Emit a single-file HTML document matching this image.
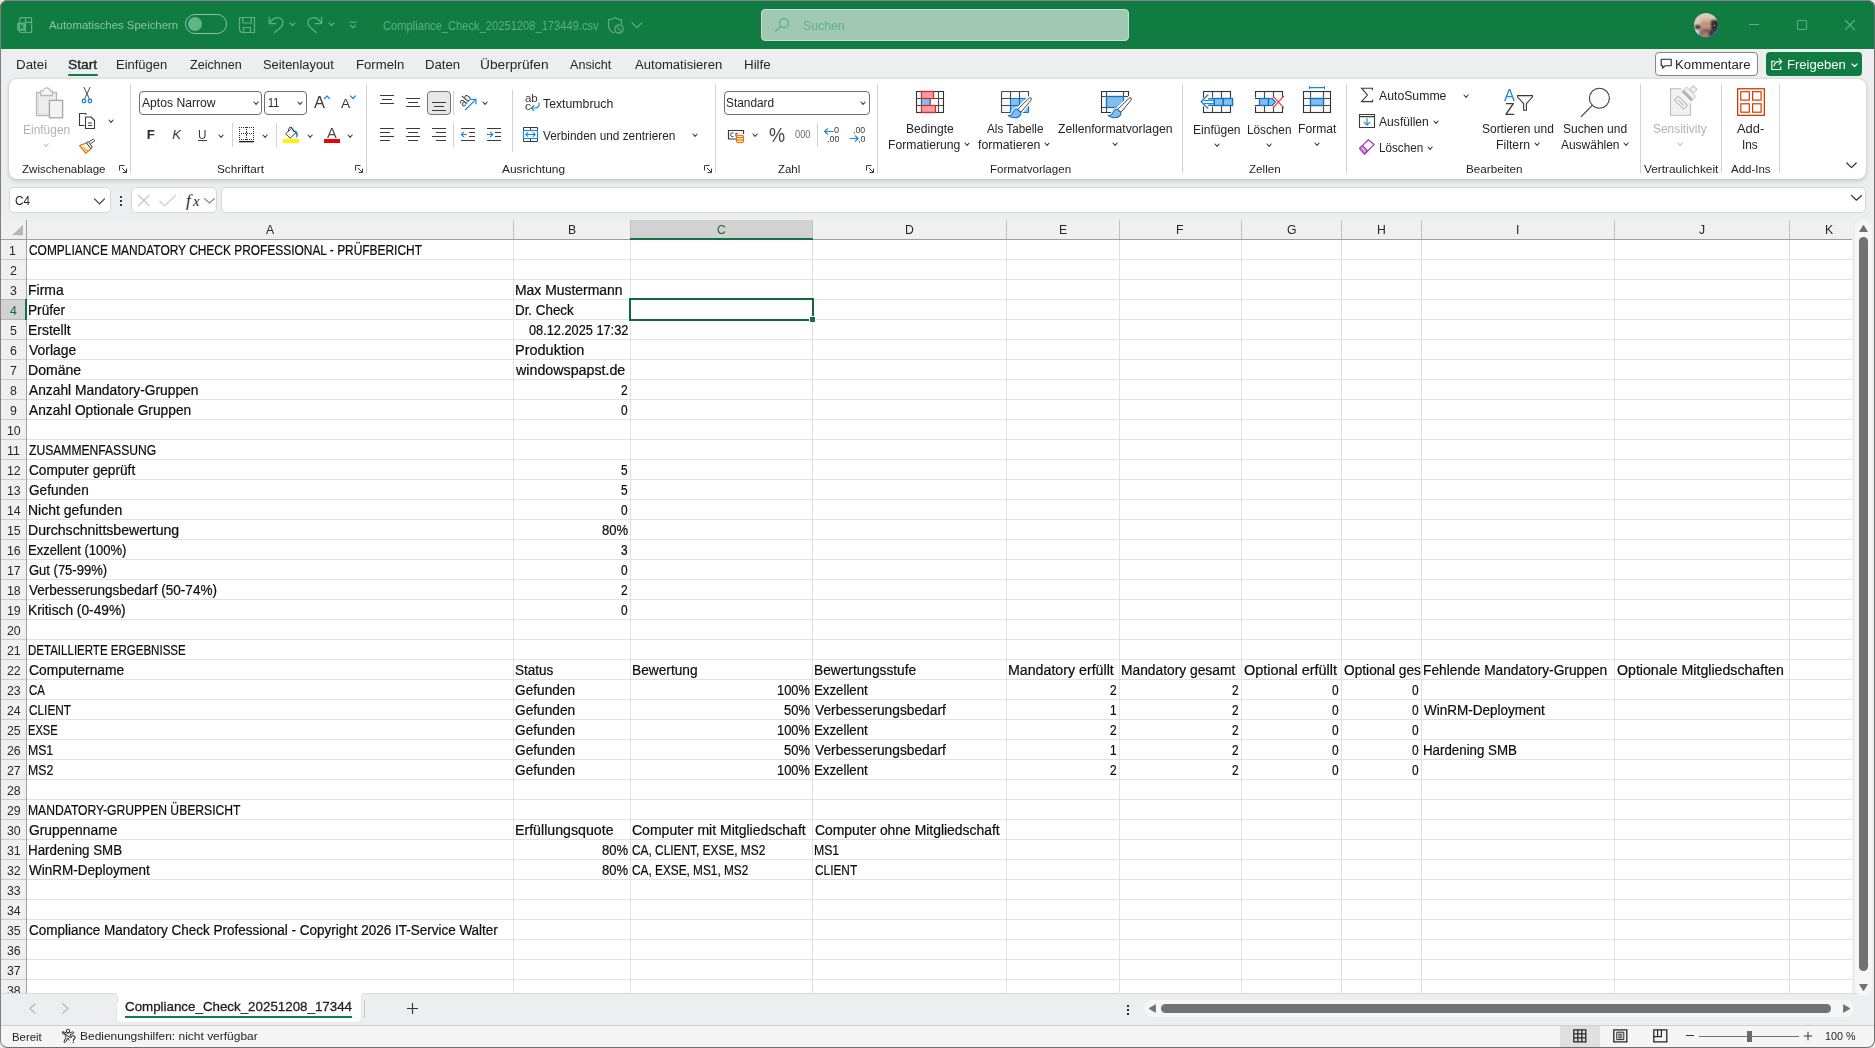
<!DOCTYPE html><html lang="de"><head><meta charset="utf-8"><title>Compliance_Check_20251208_173449.csv - Excel</title><style>

html,body{margin:0;padding:0}
body{width:1875px;height:1048px;position:relative;overflow:hidden;background:#EDEEF0;font-family:"Liberation Sans",sans-serif;}
#w div,#w svg,#w span{position:absolute;box-sizing:border-box}
#w span{white-space:pre;line-height:1;transform-origin:0 0;display:block}
#w{position:absolute;left:0;top:0;width:1875px;height:1048px;overflow:hidden}

</style></head><body><div id="w">
<div style="left:0px;top:0px;width:1875px;height:49px;background:#107C41;"></div>
<svg style="left:16px;top:16px;" width="18" height="18" viewBox="0 0 18 18" fill="none"><rect x="3.6" y="1.7" width="12" height="14.8" rx="1.6" stroke="#5FAE85" stroke-width="1.2"/><path d="M9.5 1.7 V16.5 M9.5 6.4 H15.6" stroke="#5FAE85" stroke-width="1.2"/><rect x="1.1" y="6.4" width="8.8" height="8.4" rx="1.5" fill="#5BB083"/><path d="M3.9 8.6 L7.1 12.7 M7.1 8.6 L3.9 12.7" stroke="#107C41" stroke-width="1.2"/></svg>
<div style="left:185px;top:14px;width:42px;height:20px;background:transparent;border:1px solid #8AC4A5;border-radius:10px"></div>
<div style="left:188px;top:17px;width:14px;height:14px;background:#62B389;border-radius:7px"></div>
<svg style="left:238px;top:16px;" width="18" height="18" viewBox="0 0 18 18" fill="none"><path d="M1.5 1.5 H16.5 V16.5 H3.6 L1.5 14.4 Z" stroke="#5FAE85" stroke-width="1.2" stroke-linejoin="round"/><path d="M4.8 1.5 V7 H13.2 V1.5 M5.5 16.5 V11.5 H12.5 V16.5" stroke="#5FAE85" stroke-width="1.2"/></svg>
<svg style="left:267px;top:15px;" width="18" height="20" viewBox="0 0 18 20" fill="none"><path d="M2.2 2.3 V8.7 H8.6" stroke="#5FAE85" stroke-width="1.3" stroke-linecap="round" stroke-linejoin="round"/><path d="M2.6 8.4 C4.5 4.4 8.5 1.6 12.5 3 C16.5 4.6 17 9 14 12 L7.5 17.6" stroke="#5FAE85" stroke-width="1.3" stroke-linecap="round"/></svg>
<svg style="left:287.8px;top:21.0px;" width="9" height="6.6" viewBox="0 0 9 6.6" fill="none"><path d="M2 2 L4.5 4.6 L7 2" stroke="#5FAE85" stroke-width="1.2" stroke-linecap="round" stroke-linejoin="round"/></svg>
<svg style="left:305px;top:15px;" width="18" height="20" viewBox="0 0 18 20" fill="none"><path d="M16.6 2.3 V8.7 H10.2" stroke="#5FAE85" stroke-width="1.3" stroke-linecap="round" stroke-linejoin="round"/><path d="M16.2 8.4 C14.3 4.4 10.3 1.6 6.3 3 C2.3 4.6 1.8 9 4.8 12 L11.3 17.6" stroke="#5FAE85" stroke-width="1.3" stroke-linecap="round"/></svg>
<svg style="left:326.8px;top:21.0px;" width="9" height="6.6" viewBox="0 0 9 6.6" fill="none"><path d="M2 2 L4.5 4.6 L7 2" stroke="#5FAE85" stroke-width="1.2" stroke-linecap="round" stroke-linejoin="round"/></svg>
<svg style="left:348px;top:19px;" width="10" height="10" viewBox="0 0 10 10" fill="none"><path d="M1.6 3.2 H8.6" stroke="#5FAE85" stroke-width="1.1"/><path d="M2.2 6 L5.1 8.6 L8 6" stroke="#5FAE85" stroke-width="1.2"/></svg>
<svg style="left:607px;top:16px;" width="18" height="19" viewBox="0 0 18 19" fill="none"><path d="M8 1.5 C6 3 3.5 3.8 1.5 3.8 V9 C1.5 13 4 15.8 7 17" stroke="#5FAE85" stroke-width="1.2" stroke-linecap="round"/><path d="M8 1.5 C10 3 12.5 3.8 14.5 3.8 V8" stroke="#5FAE85" stroke-width="1.2" stroke-linecap="round"/><circle cx="12" cy="13" r="4.2" stroke="#5FAE85" stroke-width="1.2"/><path d="M9.2 10.2 L14.8 15.8" stroke="#5FAE85" stroke-width="1.2"/></svg>
<svg style="left:629.7px;top:21.2px;" width="13.6" height="8.6" viewBox="0 0 13.6 8.6" fill="none"><path d="M2 2 L6.8 6.6 L11.6 2" stroke="#5FAE85" stroke-width="1.2" stroke-linecap="round" stroke-linejoin="round"/></svg>
<div style="left:761px;top:9px;width:368px;height:32px;background:#A1C8B3;border:1px solid #C6DDD1;border-radius:4px"></div>
<svg style="left:773px;top:16px;" width="18" height="18" viewBox="0 0 18 18" fill="none"><circle cx="11" cy="7" r="4.5" stroke="#5DB386" stroke-width="1.3"/><path d="M7.8 10.2 L2.5 15.5" stroke="#5DB386" stroke-width="1.3" stroke-linecap="round"/></svg>
<div style="left:1694px;top:13px;width:24px;height:24px;border-radius:12px;overflow:hidden;background:#D8CCBF"><div style="left:0;top:0;width:24px;height:24px;filter:blur(1.1px)"><div style="left:17px;top:6.5px;width:8px;height:11.5px;background:#3a2b2b"></div><div style="left:0.5px;top:11.5px;width:6px;height:4.5px;background:#33322c"></div><div style="left:0;top:17px;width:24px;height:8px;background:linear-gradient(90deg,#e9e5ea 0,#e9e5ea 14%,#5a5c86 30%,#2b2d4b 55%,#3c4170 85%,#55597f 100%)"></div><div style="left:6.2px;top:3.6px;width:11px;height:15.6px;border-radius:5.5px 5.5px 5px 5px;background:linear-gradient(180deg,#e3c3b3 0,#cfa08b 35%,#c4937e 70%,#8f6959 100%)"></div><div style="left:8px;top:18px;width:6.5px;height:7px;background:#b27a63"></div><div style="left:8px;top:9.6px;width:7.6px;height:1.8px;background:#9a7464;opacity:.8"></div><div style="left:8.6px;top:15.6px;width:6.4px;height:3.4px;border-radius:2px;background:#6d4e42;opacity:.8"></div></div><div style="left:19.6px;top:11.6px;width:1.8px;height:1.8px;background:#e4e0dc;filter:blur(.4px)"></div><div style="left:0;top:0;width:0;height:0"></div></div>
<div style="left:1749px;top:24px;width:10px;height:1px;background:#5FAE85;"></div>
<div style="left:1797px;top:20px;width:10px;height:10px;background:transparent;border:1px solid #5FAE85;border-radius:1px"></div>
<svg style="left:1844px;top:19px;" width="12" height="12" viewBox="0 0 12 12" fill="none"><path d="M1 1 L11 11 M11 1 L1 11" stroke="#5FAE85" stroke-width="1.1"/></svg>
<div style="left:68px;top:74px;width:30px;height:2.4px;background:#107C41;border-radius:1.2px"></div>
<div style="left:1655px;top:52px;width:103px;height:24px;background:#fff;border:1px solid #858585;border-radius:4px"></div>
<svg style="left:1660px;top:58px;" width="13" height="12" viewBox="0 0 13 12" fill="none"><path d="M1.2 1.2 H11.2 V7.8 H5 L2.6 10.2 V7.8 H1.2 Z" stroke="#242424" stroke-width="1.1" stroke-linejoin="round"/></svg>
<div style="left:1766px;top:52px;width:96px;height:24px;background:#107C41;border-radius:4px"></div>
<svg style="left:1770px;top:57px;" width="14" height="14" viewBox="0 0 14 14" fill="none"><path d="M5 4.2 H1.8 V12.5 H10.8 V9.5" stroke="#fff" stroke-width="1.1"/><path d="M3.8 9.5 C4.3 6.3 6.3 4.6 9 4.6 H11.5 M8.8 1.6 L11.8 4.6 L8.8 7.6" stroke="#fff" stroke-width="1.1" stroke-linejoin="round"/></svg>
<svg style="left:1850.1px;top:61.55px;" width="9" height="6.5" viewBox="0 0 9 6.5" fill="none"><path d="M2 2 L4.5 4.5 L7 2" stroke="#fff" stroke-width="1.2" stroke-linecap="round" stroke-linejoin="round"/></svg>
<div style="left:9px;top:79px;width:1857px;height:100px;background:#fff;border-radius:8px;box-shadow:0 1.5px 4px rgba(0,0,0,.17),0 0 1.5px rgba(0,0,0,.14)"></div>
<div style="left:9px;top:187px;width:102px;height:26px;background:#fff;border:1px solid #D6D6D6;border-radius:5px"></div>
<svg style="left:93px;top:197px;" width="13" height="9" viewBox="0 0 13 9" fill="none"><path d="M1.5 1.8 L6.5 6.8 L11.5 1.8" stroke="#3b3b3b" stroke-width="1.2" stroke-linecap="round" stroke-linejoin="round"/></svg>
<div style="left:120px;top:196px;width:2px;height:2px;background:#3a3a3a;"></div>
<div style="left:120px;top:200px;width:2px;height:2px;background:#3a3a3a;"></div>
<div style="left:120px;top:204px;width:2px;height:2px;background:#3a3a3a;"></div>
<div style="left:131px;top:187px;width:86px;height:26px;background:#fff;border:1px solid #D6D6D6;border-radius:5px"></div>
<svg style="left:137px;top:194px;" width="14" height="13" viewBox="0 0 14 13" fill="none"><path d="M1.2 1 L12.5 12 M12.5 1 L1.2 12" stroke="#C4C4C4" stroke-width="1.1"/></svg>
<svg style="left:158px;top:194px;" width="20" height="13" viewBox="0 0 20 13" fill="none"><path d="M1.5 7 L6.5 11.8 L18 1.2" stroke="#C4C4C4" stroke-width="1.1"/></svg>
<svg style="left:203px;top:197px;" width="13" height="8" viewBox="0 0 13 8" fill="none"><path d="M1.5 1.5 L6.5 6 L11.5 1.5" stroke="#8a8a8a" stroke-width="1.1" stroke-linecap="round" stroke-linejoin="round"/></svg>
<div style="left:221px;top:187px;width:1645px;height:26px;background:#fff;border:1px solid #D6D6D6;border-radius:5px"></div>
<svg style="left:1850px;top:194px;" width="13" height="8" viewBox="0 0 13 8" fill="none"><path d="M1.5 1.5 L6.5 6.2 L11.5 1.5" stroke="#3b3b3b" stroke-width="1.2" stroke-linecap="round" stroke-linejoin="round"/></svg>
<div style="left:110px;top:993px;width:258px;height:8px;background:#fff;"></div>
<div style="left:117px;top:993px;width:244px;height:28.5px;background:#fff;border-radius:0 0 4.5px 4.5px;box-shadow:0 0 0 0.6px #E4E4E4"></div>
<div style="left:1px;top:993px;width:116.5px;height:10px;background:#EDEEF0;border-top:1px solid #DADADA;border-right:1px solid #E2E2E2;border-top-right-radius:4.5px"></div>
<div style="left:360.5px;top:993px;width:1500px;height:10px;background:#EDEEF0;border-top:1px solid #DADADA;border-left:1px solid #E2E2E2;border-top-left-radius:4.5px"></div>
<div style="left:125px;top:1016px;width:227px;height:2px;background:#107C41;"></div>
<svg style="left:28px;top:1003px;" width="9" height="11" viewBox="0 0 9 11" fill="none"><path d="M7 1 L2 5.5 L7 10" stroke="#B4B4B4" stroke-width="1.2" stroke-linecap="round" stroke-linejoin="round"/></svg>
<svg style="left:61px;top:1003px;" width="9" height="11" viewBox="0 0 9 11" fill="none"><path d="M2 1 L7 5.5 L2 10" stroke="#B4B4B4" stroke-width="1.2" stroke-linecap="round" stroke-linejoin="round"/></svg>
<div style="left:364px;top:1000px;width:1px;height:18px;background:#C8C8C8;"></div>
<svg style="left:406px;top:1002px;" width="13" height="13" viewBox="0 0 13 13" fill="none"><path d="M6.5 1 V12 M1 6.5 H12" stroke="#333" stroke-width="1.1"/></svg>
<div style="left:1127px;top:1005px;width:2px;height:2px;background:#2b2b2b;"></div>
<div style="left:1127px;top:1009px;width:2px;height:2px;background:#2b2b2b;"></div>
<div style="left:1127px;top:1013px;width:2px;height:2px;background:#2b2b2b;"></div>
<div style="left:1144px;top:1000px;width:710px;height:17px;background:#F6F6F6;border-radius:8.5px"></div>
<svg style="left:1148px;top:1003px;" width="9" height="11" viewBox="0 0 9 11" fill="none"><path d="M7.6 1.2 Q7.9 1 7.9 1.5 V9.5 Q7.9 10 7.5 9.8 L1.2 5.9 Q0.8 5.5 1.2 5.1 Z" fill="#727272"/></svg>
<div style="left:1161px;top:1004px;width:670px;height:9.4px;background:#727272;border-radius:4.7px"></div>
<svg style="left:1842px;top:1003px;" width="9" height="11" viewBox="0 0 9 11" fill="none"><path d="M1.4 1.2 Q1.1 1 1.1 1.5 V9.5 Q1.1 10 1.5 9.8 L7.8 5.9 Q8.2 5.5 7.8 5.1 Z" fill="#727272"/></svg>
<div style="left:0px;top:1025px;width:1875px;height:1px;background:#CFCFCF;"></div>
<div style="left:0px;top:1026px;width:1875px;height:22px;background:#F5F5F5;"></div>
<svg style="left:61px;top:1028px;" width="17" height="16" viewBox="0 0 17 16" fill="none"><circle cx="7" cy="2.9" r="1.7" stroke="#2e2e2e" stroke-width="1"/><path d="M1.8 3.9 C1 4.4 1.2 5.4 2 5.6 L4.8 6.8 V9.6 L3 13.6 C2.8 14.6 4 15 4.5 14.2 L7 10 L8.2 12.2 M9.2 9.4 V6.8 L12 5.6 C12.8 5.4 13 4.4 12.2 3.9 C11.6 3.6 11 4 10.4 4.3 C8.2 5.3 5.8 5.3 3.6 4.3 C3 4 2.4 3.6 1.8 3.9 Z" stroke="#2e2e2e" stroke-width="1" stroke-linejoin="round" stroke-linecap="round"/><path d="M10.4 9.2 C10.5 7.4 14 7.2 14.1 9.2 C14.2 10.7 12.3 10.8 12.3 12.4 M12.3 14 V14.7" stroke="#2e2e2e" stroke-width="1.1" stroke-linecap="round"/></svg>
<div style="left:1560px;top:1026px;width:40px;height:22px;background:#E0E0E0;"></div>
<svg style="left:1573px;top:1029px;" width="14" height="14" viewBox="0 0 14 14" fill="none"><path d="M0.8 0.8 H12.8 V12.8 H0.8 Z M0.8 4.8 H12.8 M0.8 8.8 H12.8 M4.8 0.8 V12.8 M8.8 0.8 V12.8" stroke="#262626" stroke-width="1.3"/></svg>
<svg style="left:1613px;top:1029px;" width="15" height="14" viewBox="0 0 15 14" fill="none"><path d="M0.8 0.8 H13.8 V12.8 H0.8 Z" stroke="#262626" stroke-width="1.3"/><path d="M3.8 3.2 H10.8 V10.6 H3.8 Z M5.2 5.2 H9.4 M5.2 7 H9.4 M5.2 8.8 H9.4" stroke="#262626" stroke-width="1"/></svg>
<svg style="left:1653px;top:1029px;" width="15" height="14" viewBox="0 0 15 14" fill="none"><path d="M0.8 0.8 H13.8 V12.8 H0.8 Z" stroke="#262626" stroke-width="1.3"/><path d="M0.8 7.6 H8.4 V0.8 M4.6 0.8 V7.6" stroke="#262626" stroke-width="1.2"/></svg>
<div style="left:1686px;top:1035px;width:8px;height:1px;background:#333;"></div>
<div style="left:1699px;top:1036px;width:100px;height:1px;background:#6e6e6e;"></div>
<div style="left:1747px;top:1031px;width:5px;height:11px;background:#6a6a6a;"></div>
<svg style="left:1803px;top:1031px;" width="10" height="10" viewBox="0 0 10 10" fill="none"><path d="M5 0.8 V9.2 M0.8 5 H9.2" stroke="#333" stroke-width="1"/></svg>
<svg style="left:35px;top:86px;" width="30" height="33" viewBox="0 0 30 33" fill="none"><path d="M1.5 6.5 H6 V9.5 H17 V6.5 H21.5 V29.7 H1.5 Z" fill="#EDEDED" stroke="#B9B9B9" stroke-width="1.3"/><path d="M3.2 8 V28 H14" stroke="#DCDCDC" stroke-width="1.2"/><path d="M5.6 9.4 V4.8 H8.4 C8.4 0.9 14.8 0.9 14.8 4.8 H17.4 V9.4 Z" fill="#F6F6F6" stroke="#B9B9B9" stroke-width="1.2" stroke-linejoin="round"/><rect x="14.4" y="14.4" width="13.2" height="17.4" fill="#F3F3F3" stroke="#A6A6A6" stroke-width="1.3"/></svg>
<svg style="left:42.3px;top:142.05px;" width="8.2" height="6.3" viewBox="0 0 8.2 6.3" fill="none"><path d="M2 2 L4.1 4.3 L6.2 2" stroke="#BDBDBD" stroke-width="1.05" stroke-linecap="round" stroke-linejoin="round"/></svg>
<svg style="left:80px;top:86px;" width="14" height="19" viewBox="0 0 14 19" fill="none"><path d="M3.8 1 L9.6 13.4 M10.2 1 L4.4 13.4" stroke="#3A3A3A" stroke-width="0.9"/><circle cx="4" cy="15" r="1.75" stroke="#1E8BD8" stroke-width="1.3"/><circle cx="10" cy="15" r="1.75" stroke="#1E8BD8" stroke-width="1.3"/></svg>
<svg style="left:78px;top:112px;" width="18" height="18" viewBox="0 0 18 18" fill="none"><path d="M6.5 13.5 H1.5 V1.5 H7.5 L8.5 2.5" stroke="#3A3A3A" stroke-width="1.1" stroke-linejoin="round"/><path d="M7.5 5 H13 L16.5 8.5 V16.5 H7.5 Z" fill="#fff" stroke="#3A3A3A" stroke-width="1.1" stroke-linejoin="round"/><path d="M10 11 H14 M10 13.5 H14" stroke="#3A3A3A" stroke-width="1"/></svg>
<svg style="left:106.5px;top:118.45px;" width="8.2" height="6.3" viewBox="0 0 8.2 6.3" fill="none"><path d="M2 2 L4.1 4.3 L6.2 2" stroke="#3A3A3A" stroke-width="1.1" stroke-linecap="round" stroke-linejoin="round"/></svg>
<svg style="left:78px;top:138px;" width="18" height="18" viewBox="0 0 18 18" fill="none"><path d="M1.6 7.6 L8.6 4.8 L13.2 10.4 L7.6 15.2 Z" fill="#FFF8EE" stroke="#E07A10" stroke-width="1.3" stroke-linejoin="round"/><path d="M6.2 11.4 L10 12.2 L7.6 14.4 Z" fill="#FFD27A"/><path d="M4.4 9.2 L9.6 12.6" stroke="#E07A10" stroke-width="0.9"/><path d="M8.4 4.8 L10.2 3.5 L14.4 9.2 L12.8 10.5 Z M11.2 3.7 L14.7 1.4 Q15.7 1 16.3 1.9 Q16.7 2.8 15.9 3.5 L12.6 5.7" fill="#fff" stroke="#3A3A3A" stroke-width="1" stroke-linejoin="round"/></svg>
<svg style="left:119px;top:164.5px;" width="9" height="9" viewBox="0 0 9 9" fill="none"><path d="M0.5 5.5 V0.5 H5.5" stroke="#3b3b3b" stroke-width="1"/><path d="M2.8 2.8 L7.4 7.4 M7.5 3.6 V7.5 H3.6" stroke="#3b3b3b" stroke-width="1"/></svg>
<div style="left:130px;top:84px;width:1px;height:89px;background:#D2D2D2;"></div>
<div style="left:139px;top:91px;width:123px;height:24px;background:#fff;border:1px solid #6E6E6E;border-radius:4px"></div>
<svg style="left:251.5px;top:100.05px;" width="8.2" height="6.3" viewBox="0 0 8.2 6.3" fill="none"><path d="M2 2 L4.1 4.3 L6.2 2" stroke="#3A3A3A" stroke-width="1.1" stroke-linecap="round" stroke-linejoin="round"/></svg>
<div style="left:264px;top:91px;width:43px;height:24px;background:#fff;border:1px solid #6E6E6E;border-radius:4px"></div>
<svg style="left:296.3px;top:100.05px;" width="8.2" height="6.3" viewBox="0 0 8.2 6.3" fill="none"><path d="M2 2 L4.1 4.3 L6.2 2" stroke="#3A3A3A" stroke-width="1.1" stroke-linecap="round" stroke-linejoin="round"/></svg>
<svg style="left:323px;top:94px;" width="8" height="6" viewBox="0 0 8 6" fill="none"><path d="M1.5 4.5 L4 2 L6.5 4.5" stroke="#1E8BD8" stroke-width="1.2" stroke-linecap="round" stroke-linejoin="round"/></svg>
<svg style="left:349px;top:94px;" width="8" height="6" viewBox="0 0 8 6" fill="none"><path d="M1.5 2 L4 4.5 L6.5 2" stroke="#1E8BD8" stroke-width="1.2" stroke-linecap="round" stroke-linejoin="round"/></svg>
<div style="left:198px;top:140px;width:9px;height:1px;background:#3A3A3A;"></div>
<svg style="left:217.3px;top:132.65px;" width="8.2" height="6.3" viewBox="0 0 8.2 6.3" fill="none"><path d="M2 2 L4.1 4.3 L6.2 2" stroke="#3A3A3A" stroke-width="1.1" stroke-linecap="round" stroke-linejoin="round"/></svg>
<div style="left:232px;top:123px;width:1px;height:24px;background:#D2D2D2;"></div>
<svg style="left:239px;top:127px;" width="15" height="16" viewBox="0 0 15 16" fill="none"><g fill="#2b2b2b" shape-rendering="crispEdges"><rect x="0" y="0" width="1" height="1"/><rect x="0" y="6" width="1" height="1"/><rect x="0" y="12" width="1" height="1"/><rect x="2" y="0" width="1" height="1"/><rect x="2" y="6" width="1" height="1"/><rect x="2" y="12" width="1" height="1"/><rect x="4" y="0" width="1" height="1"/><rect x="4" y="6" width="1" height="1"/><rect x="4" y="12" width="1" height="1"/><rect x="6" y="0" width="1" height="1"/><rect x="6" y="6" width="1" height="1"/><rect x="6" y="12" width="1" height="1"/><rect x="8" y="0" width="1" height="1"/><rect x="8" y="6" width="1" height="1"/><rect x="8" y="12" width="1" height="1"/><rect x="10" y="0" width="1" height="1"/><rect x="10" y="6" width="1" height="1"/><rect x="10" y="12" width="1" height="1"/><rect x="12" y="0" width="1" height="1"/><rect x="12" y="6" width="1" height="1"/><rect x="12" y="12" width="1" height="1"/><rect x="14" y="0" width="1" height="1"/><rect x="14" y="6" width="1" height="1"/><rect x="14" y="12" width="1" height="1"/><rect x="0" y="0" width="1" height="1"/><rect x="7" y="0" width="1" height="1"/><rect x="14" y="0" width="1" height="1"/><rect x="0" y="2" width="1" height="1"/><rect x="7" y="2" width="1" height="1"/><rect x="14" y="2" width="1" height="1"/><rect x="0" y="4" width="1" height="1"/><rect x="7" y="4" width="1" height="1"/><rect x="14" y="4" width="1" height="1"/><rect x="0" y="6" width="1" height="1"/><rect x="14" y="6" width="1" height="1"/><rect x="0" y="8" width="1" height="1"/><rect x="7" y="8" width="1" height="1"/><rect x="14" y="8" width="1" height="1"/><rect x="0" y="10" width="1" height="1"/><rect x="7" y="10" width="1" height="1"/><rect x="14" y="10" width="1" height="1"/><rect x="0" y="12" width="1" height="1"/><rect x="7" y="12" width="1" height="1"/><rect x="14" y="12" width="1" height="1"/><rect x="7" y="5" width="1" height="1"/><rect x="7" y="7" width="1" height="1"/><rect x="0" y="14" width="15" height="1"/></g><rect x="0" y="14" width="15" height="1.3" fill="#1b1b1b"/></svg>
<svg style="left:261.4px;top:132.65px;" width="8.2" height="6.3" viewBox="0 0 8.2 6.3" fill="none"><path d="M2 2 L4.1 4.3 L6.2 2" stroke="#3A3A3A" stroke-width="1.1" stroke-linecap="round" stroke-linejoin="round"/></svg>
<div style="left:276px;top:123px;width:1px;height:24px;background:#D2D2D2;"></div>
<svg style="left:283px;top:125px;" width="18" height="16" viewBox="0 0 18 16" fill="none"><path d="M8.6 3.4 L12.7 7.9 L7.1 13.2 L2.6 8.7 Z" fill="#fff" stroke="#3A3A3A" stroke-width="1" stroke-linejoin="round"/><path d="M5.6 6.2 C5.2 3.6 6.4 1.8 8 2.2 C9.6 2.4 10.2 4 10.4 7" stroke="#3A3A3A" stroke-width="1"/><path d="M12 5.4 C13.8 6.2 15 8.4 14.4 10.6 C14.2 11.6 13.8 12.2 13.4 12.6 C13.6 10.6 13.4 9.4 12.6 8.2 Z" fill="#1B7FD0" stroke="#1B7FD0" stroke-width="0.6"/></svg>
<div style="left:283px;top:139px;width:16px;height:3.7px;background:#FFF100;"></div>
<svg style="left:305.5px;top:132.65px;" width="8.2" height="6.3" viewBox="0 0 8.2 6.3" fill="none"><path d="M2 2 L4.1 4.3 L6.2 2" stroke="#3A3A3A" stroke-width="1.1" stroke-linecap="round" stroke-linejoin="round"/></svg>
<div style="left:324px;top:139px;width:16px;height:3.7px;background:#F00000;"></div>
<svg style="left:346.2px;top:132.65px;" width="8.2" height="6.3" viewBox="0 0 8.2 6.3" fill="none"><path d="M2 2 L4.1 4.3 L6.2 2" stroke="#3A3A3A" stroke-width="1.1" stroke-linecap="round" stroke-linejoin="round"/></svg>
<svg style="left:355px;top:164.5px;" width="9" height="9" viewBox="0 0 9 9" fill="none"><path d="M0.5 5.5 V0.5 H5.5" stroke="#3b3b3b" stroke-width="1"/><path d="M2.8 2.8 L7.4 7.4 M7.5 3.6 V7.5 H3.6" stroke="#3b3b3b" stroke-width="1"/></svg>
<div style="left:366px;top:84px;width:1px;height:89px;background:#D2D2D2;"></div>
<div style="left:380px;top:95px;width:14px;height:1px;background:#3A3A3A;"></div>
<div style="left:382px;top:99px;width:10px;height:1px;background:#3A3A3A;"></div>
<div style="left:380px;top:103px;width:14px;height:1px;background:#3A3A3A;"></div>
<div style="left:406px;top:98px;width:14px;height:1px;background:#3A3A3A;"></div>
<div style="left:408px;top:102px;width:10px;height:1px;background:#3A3A3A;"></div>
<div style="left:406px;top:106px;width:14px;height:1px;background:#3A3A3A;"></div>
<div style="left:427px;top:91px;width:24px;height:24px;background:#E8E8E8;border:1px solid #757575;border-radius:4px"></div>
<div style="left:432px;top:102px;width:14px;height:1px;background:#3A3A3A;"></div>
<div style="left:434px;top:106px;width:10px;height:1px;background:#3A3A3A;"></div>
<div style="left:432px;top:110px;width:14px;height:1px;background:#3A3A3A;"></div>
<div style="left:453px;top:91px;width:1px;height:24px;background:#D2D2D2;"></div>
<svg style="left:459px;top:93px;" width="19" height="19" viewBox="0 0 19 19" fill="none"><path d="M6.4 16.7 L16.6 6.6 M12.4 6.3 H16.9 V10.8" stroke="#1E8BD8" stroke-width="1.2" stroke-linecap="round" stroke-linejoin="round"/></svg>
<div style="left:457.6px;top:93.7px;font-size:12.5px;line-height:1;white-space:pre;color:#444;transform:rotate(-50deg) scaleX(.9);transform-origin:50% 50%">ab</div>
<svg style="left:480.7px;top:100.05px;" width="8.2" height="6.3" viewBox="0 0 8.2 6.3" fill="none"><path d="M2 2 L4.1 4.3 L6.2 2" stroke="#3A3A3A" stroke-width="1.1" stroke-linecap="round" stroke-linejoin="round"/></svg>
<div style="left:380px;top:128px;width:14px;height:1px;background:#3A3A3A;"></div>
<div style="left:380px;top:132px;width:10px;height:1px;background:#3A3A3A;"></div>
<div style="left:380px;top:136px;width:14px;height:1px;background:#3A3A3A;"></div>
<div style="left:380px;top:140px;width:10px;height:1px;background:#3A3A3A;"></div>
<div style="left:406px;top:128px;width:14px;height:1px;background:#3A3A3A;"></div>
<div style="left:408px;top:132px;width:10px;height:1px;background:#3A3A3A;"></div>
<div style="left:406px;top:136px;width:14px;height:1px;background:#3A3A3A;"></div>
<div style="left:408px;top:140px;width:10px;height:1px;background:#3A3A3A;"></div>
<div style="left:432px;top:128px;width:14px;height:1px;background:#3A3A3A;"></div>
<div style="left:436px;top:132px;width:10px;height:1px;background:#3A3A3A;"></div>
<div style="left:432px;top:136px;width:14px;height:1px;background:#3A3A3A;"></div>
<div style="left:436px;top:140px;width:10px;height:1px;background:#3A3A3A;"></div>
<div style="left:453px;top:123px;width:1px;height:24px;background:#D2D2D2;"></div>
<div style="left:461px;top:128px;width:14px;height:1px;background:#3A3A3A;"></div>
<div style="left:469px;top:132px;width:6px;height:1px;background:#3A3A3A;"></div>
<div style="left:469px;top:136px;width:6px;height:1px;background:#3A3A3A;"></div>
<div style="left:461px;top:140px;width:14px;height:1px;background:#3A3A3A;"></div>
<svg style="left:460px;top:130px;" width="8" height="9" viewBox="0 0 8 9" fill="none"><path d="M6.6 4.5 H1.6 M3.8 2.1 L1.3 4.5 L3.8 6.9" stroke="#1E8BD8" stroke-width="1.2" stroke-linecap="round" stroke-linejoin="round"/></svg>
<div style="left:487px;top:128px;width:14px;height:1px;background:#3A3A3A;"></div>
<div style="left:495px;top:132px;width:6px;height:1px;background:#3A3A3A;"></div>
<div style="left:495px;top:136px;width:6px;height:1px;background:#3A3A3A;"></div>
<div style="left:487px;top:140px;width:14px;height:1px;background:#3A3A3A;"></div>
<svg style="left:486px;top:130px;" width="8" height="9" viewBox="0 0 8 9" fill="none"><path d="M1.2 4.5 H6.4 M4.2 2.1 L6.7 4.5 L4.2 6.9" stroke="#1E8BD8" stroke-width="1.2" stroke-linecap="round" stroke-linejoin="round"/></svg>
<div style="left:512px;top:90px;width:1px;height:62px;background:#D2D2D2;"></div>
<svg style="left:530px;top:102px;" width="10" height="10" viewBox="0 0 10 10" fill="none"><path d="M9 1 C9.6 4.2 8 6 5.5 6 H1.5 M3.8 3.6 L1.3 6 L3.8 8.4" stroke="#1E8BD8" stroke-width="1.2" stroke-linecap="round" stroke-linejoin="round"/></svg>
<svg style="left:522px;top:126px;" width="17" height="17" viewBox="0 0 17 17" fill="none"><path d="M1.5 1.5 H15.5 V15.5 H1.5 Z M8.5 1.5 V4.5 M8.5 12.5 V15.5" stroke="#3A3A3A" stroke-width="1"/><rect x="1.5" y="4.5" width="14" height="8" fill="#fff" stroke="#1E8BD8" stroke-width="1.2"/><path d="M4 8.5 H13 M5.8 6.6 L3.8 8.5 L5.8 10.4 M11.2 6.6 L13.2 8.5 L11.2 10.4" stroke="#1E8BD8" stroke-width="1.1" stroke-linecap="round" stroke-linejoin="round"/></svg>
<svg style="left:691.2px;top:132.45px;" width="8.2" height="6.3" viewBox="0 0 8.2 6.3" fill="none"><path d="M2 2 L4.1 4.3 L6.2 2" stroke="#3A3A3A" stroke-width="1.1" stroke-linecap="round" stroke-linejoin="round"/></svg>
<svg style="left:704px;top:164.5px;" width="9" height="9" viewBox="0 0 9 9" fill="none"><path d="M0.5 5.5 V0.5 H5.5" stroke="#3b3b3b" stroke-width="1"/><path d="M2.8 2.8 L7.4 7.4 M7.5 3.6 V7.5 H3.6" stroke="#3b3b3b" stroke-width="1"/></svg>
<div style="left:715px;top:84px;width:1px;height:89px;background:#D2D2D2;"></div>
<div style="left:724px;top:91px;width:146px;height:24px;background:#fff;border:1px solid #6E6E6E;border-radius:4px"></div>
<svg style="left:859.3px;top:100.05px;" width="8.2" height="6.3" viewBox="0 0 8.2 6.3" fill="none"><path d="M2 2 L4.1 4.3 L6.2 2" stroke="#3A3A3A" stroke-width="1.1" stroke-linecap="round" stroke-linejoin="round"/></svg>
<svg style="left:727px;top:129px;" width="18" height="15" viewBox="0 0 18 15" fill="none"><path d="M9 10 H1.5 V1.5 H16.5 V5" stroke="#3A3A3A" stroke-width="1.2"/><path d="M6.5 3.8 C4.2 3.2 3.6 5 3.6 5.8 C3.6 6.8 4.4 8.2 6.5 7.6 M9 4 V7.5 M9 5 C9.6 4 10.8 4 11.2 4.4" stroke="#3A3A3A" stroke-width="1"/><path d="M9.5 7.5 C9.5 5.6 16.5 5.6 16.5 7.5 V12.2 C16.5 14.2 9.5 14.2 9.5 12.2 Z" fill="#FCE8D0" stroke="#E07A10" stroke-width="1.1"/><path d="M9.5 7.5 C9.5 9.3 16.5 9.3 16.5 7.5 M9.5 9.9 C9.5 11.7 16.5 11.7 16.5 9.9" stroke="#E07A10" stroke-width="1.1"/></svg>
<svg style="left:750.5px;top:132.45px;" width="8.2" height="6.3" viewBox="0 0 8.2 6.3" fill="none"><path d="M2 2 L4.1 4.3 L6.2 2" stroke="#3A3A3A" stroke-width="1.1" stroke-linecap="round" stroke-linejoin="round"/></svg>
<div style="left:817px;top:123px;width:1px;height:24px;background:#D2D2D2;"></div>
<svg style="left:823px;top:127px;" width="17" height="17" viewBox="0 0 17 17" fill="none"><path d="M10.2 4.5 H1.8 M4.6 1.8 L1.6 4.5 L4.6 7.2" stroke="#1E8BD8" stroke-width="1.2" stroke-linecap="round" stroke-linejoin="round"/></svg>
<svg style="left:849px;top:134px;" width="12" height="9" viewBox="0 0 12 9" fill="none"><path d="M1.2 4.5 H9 M6.2 1.8 L9.2 4.5 L6.2 7.2" stroke="#1E8BD8" stroke-width="1.2" stroke-linecap="round" stroke-linejoin="round"/></svg>
<svg style="left:866px;top:164.5px;" width="9" height="9" viewBox="0 0 9 9" fill="none"><path d="M0.5 5.5 V0.5 H5.5" stroke="#3b3b3b" stroke-width="1"/><path d="M2.8 2.8 L7.4 7.4 M7.5 3.6 V7.5 H3.6" stroke="#3b3b3b" stroke-width="1"/></svg>
<div style="left:877px;top:84px;width:1px;height:89px;background:#D2D2D2;"></div>
<svg style="left:915px;top:90px;" width="30" height="24" viewBox="0 0 30 24" fill="none"><rect x="1.5" y="1.5" width="27" height="21" fill="#FAFAFA"/><path d="M1.5 8.5 H28.5 M1.5 15.5 H28.5 M6.5 1.5 V22.5 M23.5 1.5 V22.5 M18.5 1.5 V8.5 M20.5 15.5 V22.5 M15 8.5 V15.5" stroke="#4A4A4A" stroke-width="1"/><rect x="6.5" y="1.5" width="12" height="7" fill="#FF9AA2" stroke="#E0281E" stroke-width="1.1"/><rect x="6.5" y="8.5" width="8.5" height="7" fill="#83BEEC"/><path d="M6.5 8.5 V15.5 M15 8.5 V15.5" stroke="#1272C4" stroke-width="1.2"/><rect x="6.5" y="15.5" width="14" height="7" fill="#FF9AA2" stroke="#E0281E" stroke-width="1.1"/><rect x="1.5" y="1.5" width="27" height="21" stroke="#333" stroke-width="1.1"/><rect x="6.5" y="1.5" width="12" height="7" stroke="#E0281E" stroke-width="1.1"/><rect x="6.5" y="15.5" width="14" height="7" stroke="#E0281E" stroke-width="1.1"/></svg>
<svg style="left:962.7px;top:141.35px;" width="8.2" height="6.3" viewBox="0 0 8.2 6.3" fill="none"><path d="M2 2 L4.1 4.3 L6.2 2" stroke="#3A3A3A" stroke-width="1.1" stroke-linecap="round" stroke-linejoin="round"/></svg>
<svg style="left:1000px;top:90px;" width="33" height="30" viewBox="0 0 33 30" fill="none"><rect x="1.5" y="1.5" width="27" height="21" fill="#FAFAFA"/><rect x="10.5" y="8.5" width="18" height="14" fill="#83BEEC"/><path d="M10.5 8.5 H28.5 M10.5 15.5 H28.5 M10.5 8.5 V22.5 M19.5 8.5 V22.5 M28.5 8.5 V22.5 M10.5 22.5 H28.5" stroke="#1272C4" stroke-width="1.1"/><path d="M1.5 1.5 H28.5 V8.5 M1.5 1.5 V22.5 H10.5 M1.5 8.5 H10.5 M1.5 15.5 H10.5 M10.5 1.5 V8.5 M19.5 1.5 V8.5" stroke="#4A4A4A" stroke-width="1.1"/><path d="M30.9 7.8 Q31.8 8.8 30.7 10.6 L20.9 22.3 L17.5 19.5 L28.7 8.5 Q29.9 7.3 30.9 7.8 Z" fill="#fff" stroke="#fff" stroke-width="3.6" stroke-linejoin="round"/><path d="M17.3 19.3 L20.9 22.5 C21.5 25.5 18.5 27.9 14 27.7 C11.8 27.5 10 26.9 8.3 25.5 C11.8 25.6 12.6 24 13.2 22.2 C14 19.8 15.7 18.7 17.3 19.3 Z" fill="#fff" stroke="#fff" stroke-width="3.2" stroke-linejoin="round"/><path d="M30.9 7.8 Q31.8 8.8 30.7 10.6 L20.9 22.3 L17.5 19.5 L28.7 8.5 Q29.9 7.3 30.9 7.8 Z" fill="#F7F7F7" stroke="#4A4A4A" stroke-width="1" stroke-linejoin="round"/><path d="M17.3 19.3 L20.9 22.5 C21.5 25.5 18.5 27.9 14 27.7 C11.8 27.5 10 26.9 8.3 25.5 C11.8 25.6 12.6 24 13.2 22.2 C14 19.8 15.7 18.7 17.3 19.3 Z" fill="#83BEEC" stroke="#1272C4" stroke-width="1.1" stroke-linejoin="round"/></svg>
<svg style="left:1042.6px;top:141.35px;" width="8.2" height="6.3" viewBox="0 0 8.2 6.3" fill="none"><path d="M2 2 L4.1 4.3 L6.2 2" stroke="#3A3A3A" stroke-width="1.1" stroke-linecap="round" stroke-linejoin="round"/></svg>
<svg style="left:1100px;top:90px;" width="33" height="30" viewBox="0 0 33 30" fill="none"><rect x="1.5" y="1.5" width="27" height="5" fill="#FAFAFA"/><rect x="1.5" y="1.5" width="5" height="21" fill="#FAFAFA"/><rect x="1.5" y="17.5" width="12" height="5" fill="#FAFAFA"/><path d="M1.5 6.5 H28.5 M1.5 17.5 H8 M6.5 1.5 V22.5 M23.5 1.5 V6.5" stroke="#4A4A4A" stroke-width="1.1"/><path d="M28.5 6.8 V1.5 H1.5 V22.5 H12" stroke="#333" stroke-width="1.1"/><rect x="6.5" y="6.5" width="17" height="11" fill="#83BEEC" stroke="#1272C4" stroke-width="1.3"/><path d="M30.9 7.8 Q31.8 8.8 30.7 10.6 L20.9 22.3 L17.5 19.5 L28.7 8.5 Q29.9 7.3 30.9 7.8 Z" fill="#fff" stroke="#fff" stroke-width="3.6" stroke-linejoin="round"/><path d="M17.3 19.3 L20.9 22.5 C21.5 25.5 18.5 27.9 14 27.7 C11.8 27.5 10 26.9 8.3 25.5 C11.8 25.6 12.6 24 13.2 22.2 C14 19.8 15.7 18.7 17.3 19.3 Z" fill="#fff" stroke="#fff" stroke-width="3.2" stroke-linejoin="round"/><path d="M30.9 7.8 Q31.8 8.8 30.7 10.6 L20.9 22.3 L17.5 19.5 L28.7 8.5 Q29.9 7.3 30.9 7.8 Z" fill="#F7F7F7" stroke="#4A4A4A" stroke-width="1" stroke-linejoin="round"/><path d="M17.3 19.3 L20.9 22.5 C21.5 25.5 18.5 27.9 14 27.7 C11.8 27.5 10 26.9 8.3 25.5 C11.8 25.6 12.6 24 13.2 22.2 C14 19.8 15.7 18.7 17.3 19.3 Z" fill="#83BEEC" stroke="#1272C4" stroke-width="1.1" stroke-linejoin="round"/></svg>
<svg style="left:1110.5px;top:141.35px;" width="8.2" height="6.3" viewBox="0 0 8.2 6.3" fill="none"><path d="M2 2 L4.1 4.3 L6.2 2" stroke="#3A3A3A" stroke-width="1.1" stroke-linecap="round" stroke-linejoin="round"/></svg>
<div style="left:1182px;top:84px;width:1px;height:89px;background:#D2D2D2;"></div>
<svg style="left:1199px;top:88px;" width="36" height="28" viewBox="0 0 36 28" fill="none"><rect x="4.5" y="3.5" width="27" height="21" fill="#FAFAFA"/><path d="M4.5 10.5 H31.5 M4.5 17.5 H31.5 M13.5 3.5 V24.5 M22.5 3.5 V24.5" stroke="#4A4A4A" stroke-width="1.1"/><rect x="4.5" y="3.5" width="27" height="21" stroke="#333" stroke-width="1.1"/><rect x="3" y="9.6" width="12" height="8.8" fill="#fff"/><rect x="9" y="10.5" width="6.4" height="7" fill="#83BEEC"/><rect x="15.3" y="10.5" width="9" height="7" fill="#83BEEC" stroke="#1272C4" stroke-width="1.3"/><rect x="24.3" y="10.5" width="9.3" height="7" fill="#83BEEC" stroke="#1272C4" stroke-width="1.3"/><path d="M15.3 10.5 H9.4 M15.3 17.5 H9.4" stroke="#1272C4" stroke-width="1.2"/><rect x="4.5" y="12.6" width="10.2" height="2.8" fill="#fff"/><path d="M14.8 12.5 H4.6 M14.8 15.5 H4.6 M14.8 12.5 V15.5" stroke="#1E8BD8" stroke-width="1.1"/><path d="M8.8 7.1 L2.2 13.7 L8.8 20.3" stroke="#1E8BD8" stroke-width="1.4" stroke-linecap="round" stroke-linejoin="round"/></svg>
<svg style="left:1212.5px;top:142.15px;" width="8.2" height="6.3" viewBox="0 0 8.2 6.3" fill="none"><path d="M2 2 L4.1 4.3 L6.2 2" stroke="#3A3A3A" stroke-width="1.1" stroke-linecap="round" stroke-linejoin="round"/></svg>
<svg style="left:1254px;top:90px;" width="34" height="24" viewBox="0 0 34 24" fill="none"><rect x="1.5" y="1.5" width="27" height="21" fill="#FAFAFA"/><path d="M1.5 8.5 H28.5 M1.5 15.5 H28.5 M10.5 1.5 V22.5 M19.5 1.5 V22.5" stroke="#4A4A4A" stroke-width="1.1"/><rect x="1.5" y="1.5" width="27" height="21" stroke="#333" stroke-width="1.1"/><rect x="-1" y="7.5" width="6" height="9" fill="#fff"/><rect x="18" y="7.5" width="12" height="9" fill="#fff"/><path d="M1 8.5 H5.5 M1 15.5 H5.5" stroke="#333" stroke-width="1.1"/><rect x="5.5" y="8.5" width="9" height="7" fill="#83BEEC" stroke="#1272C4" stroke-width="1.3"/><path d="M14.5 8.5 H18.4 L21.4 12 L18.4 15.5 H14.5 Z" fill="#83BEEC" stroke="#1272C4" stroke-width="1.2"/><path d="M19.2 6.4 L29.6 17.6 M29.6 6.4 L19.2 17.6" stroke="#EE3A3A" stroke-width="1.2" stroke-linecap="round"/></svg>
<svg style="left:1264.6px;top:142.15px;" width="8.2" height="6.3" viewBox="0 0 8.2 6.3" fill="none"><path d="M2 2 L4.1 4.3 L6.2 2" stroke="#3A3A3A" stroke-width="1.1" stroke-linecap="round" stroke-linejoin="round"/></svg>
<svg style="left:1302px;top:84px;" width="31" height="30" viewBox="0 0 31 30" fill="none"><rect transform="translate(0,6)" x="1.5" y="1.5" width="27" height="21" fill="#FAFAFA"/><path transform="translate(0,6)" d="M1.5 8.5 H28.5 M1.5 15.5 H28.5 M8.5 1.5 V22.5 M21.5 1.5 V22.5" stroke="#4A4A4A" stroke-width="1.1"/><rect transform="translate(0,6)" x="1.5" y="1.5" width="27" height="21" stroke="#333" stroke-width="1.1"/><rect transform="translate(0,6)" x="8.5" y="8.5" width="13" height="7" fill="#83BEEC" stroke="#1272C4" stroke-width="1.4"/><path d="M7.5 3.6 H22.5 M7.5 2 V5.2 M22.5 2 V5.2" stroke="#1E8BD8" stroke-width="1.1"/></svg>
<svg style="left:1312.5px;top:141.35px;" width="8.2" height="6.3" viewBox="0 0 8.2 6.3" fill="none"><path d="M2 2 L4.1 4.3 L6.2 2" stroke="#3A3A3A" stroke-width="1.1" stroke-linecap="round" stroke-linejoin="round"/></svg>
<div style="left:1346px;top:84px;width:1px;height:89px;background:#D2D2D2;"></div>
<svg style="left:1360px;top:87px;" width="14" height="16" viewBox="0 0 14 16" fill="none"><path d="M12.4 3.2 V1.2 H1.6 L7.4 8 L1.6 14.6 H12.6 V12.6" stroke="#3A3A3A" stroke-width="1.1" stroke-linejoin="miter"/></svg>
<svg style="left:1462.4px;top:92.85px;" width="8.2" height="6.3" viewBox="0 0 8.2 6.3" fill="none"><path d="M2 2 L4.1 4.3 L6.2 2" stroke="#3A3A3A" stroke-width="1.1" stroke-linecap="round" stroke-linejoin="round"/></svg>
<svg style="left:1358px;top:113px;" width="18" height="16" viewBox="0 0 18 16" fill="none"><path d="M1.5 1.5 H16.5 V14.5 H1.5 Z M1.5 3.6 H16.5" stroke="#3A3A3A" stroke-width="1.1"/><path d="M9 5.6 V12 M6.2 9.4 L9 12.2 L11.8 9.4" stroke="#1E8BD8" stroke-width="1.2" stroke-linecap="round" stroke-linejoin="round"/></svg>
<svg style="left:1431.6px;top:118.65px;" width="8.2" height="6.3" viewBox="0 0 8.2 6.3" fill="none"><path d="M2 2 L4.1 4.3 L6.2 2" stroke="#3A3A3A" stroke-width="1.1" stroke-linecap="round" stroke-linejoin="round"/></svg>
<svg style="left:1358px;top:138px;" width="18" height="18" viewBox="0 0 18 18" fill="none"><path d="M1.6 10.4 L10.4 1.8 L16 6.6 L6.6 16 Z" fill="#fff" stroke="#A541B5" stroke-width="1.3" stroke-linejoin="round"/><path d="M1.6 10.4 L4.6 7.6 L9.6 12.8 L6.6 16 Z" fill="#DE9BE6" stroke="#A541B5" stroke-width="1.3" stroke-linejoin="round"/></svg>
<svg style="left:1425.8px;top:144.75px;" width="8.2" height="6.3" viewBox="0 0 8.2 6.3" fill="none"><path d="M2 2 L4.1 4.3 L6.2 2" stroke="#3A3A3A" stroke-width="1.1" stroke-linecap="round" stroke-linejoin="round"/></svg>
<svg style="left:1516px;top:94px;" width="18" height="18" viewBox="0 0 18 18" fill="none"><path d="M1.5 1.6 H16.5 V3 L10.4 9.6 V16.2 H7.6 V9.6 L1.5 3 Z" fill="#FAFAFA" stroke="#3A3A3A" stroke-width="1.1" stroke-linejoin="round"/></svg>
<svg style="left:1532.7px;top:141.35px;" width="8.2" height="6.3" viewBox="0 0 8.2 6.3" fill="none"><path d="M2 2 L4.1 4.3 L6.2 2" stroke="#3A3A3A" stroke-width="1.1" stroke-linecap="round" stroke-linejoin="round"/></svg>
<svg style="left:1579px;top:86px;" width="33" height="33" viewBox="0 0 33 33" fill="none"><circle cx="20.4" cy="12.2" r="10" fill="#FAFAFA" stroke="#3A3A3A" stroke-width="1.1"/><path d="M13.2 19.4 L2.2 30.6" stroke="#3A3A3A" stroke-width="1.1" stroke-linecap="round"/></svg>
<svg style="left:1621.7px;top:141.35px;" width="8.2" height="6.3" viewBox="0 0 8.2 6.3" fill="none"><path d="M2 2 L4.1 4.3 L6.2 2" stroke="#3A3A3A" stroke-width="1.1" stroke-linecap="round" stroke-linejoin="round"/></svg>
<div style="left:1640px;top:84px;width:1px;height:89px;background:#D2D2D2;"></div>
<svg style="left:1668px;top:84px;" width="32" height="34" viewBox="0 0 32 34" fill="none"><path d="M13.4 4.9 H2.7 V31.2 H22.3 V19.4" fill="none" stroke="#B9B9B9" stroke-width="1.3"/><path d="M3.3 5.5 H13.6 L21.7 19.4 V30.6 H3.3 Z" fill="#F1F1F1"/><g transform="translate(12.9,18.6) rotate(45)"><rect x="-6.4" y="-2.7" width="12.8" height="5.4" fill="#F7F7F7" stroke="#B9B9B9" stroke-width="1.1"/><path d="M-4.2 0 H4.2" stroke="#B9B9B9" stroke-width="1.2"/></g><g transform="translate(20.9,10.1) rotate(45)"><rect x="-7.6" y="-4.6" width="15.2" height="9.2" fill="#fff"/><rect x="-6.6" y="-3.4" width="13.2" height="6.8" fill="#EFEFEF" stroke="#C4C4C4" stroke-width="0.9"/><rect x="-6.6" y="0.6" width="13.2" height="2.8" fill="#B4B4B4"/></g><g transform="translate(25.4,5.3) rotate(45)"><rect x="-2.6" y="-2.4" width="5.2" height="4.8" fill="#F3F3F3" stroke="#C0C0C0" stroke-width="1"/></g></svg>
<svg style="left:1676.3px;top:141.35px;" width="8.2" height="6.3" viewBox="0 0 8.2 6.3" fill="none"><path d="M2 2 L4.1 4.3 L6.2 2" stroke="#BDBDBD" stroke-width="1.05" stroke-linecap="round" stroke-linejoin="round"/></svg>
<div style="left:1721px;top:84px;width:1px;height:89px;background:#D2D2D2;"></div>
<svg style="left:1736px;top:87px;" width="30" height="30" viewBox="0 0 30 30" fill="none"><rect x="1.65" y="1.75" width="26.7" height="26.6" stroke="#D83B01" stroke-width="1.3"/><rect x="4.8" y="4.7" width="8.5" height="8.4" stroke="#D83B01" stroke-width="1.2"/><rect x="16.6" y="4.7" width="8.5" height="8.4" stroke="#D83B01" stroke-width="1.2"/><rect x="4.8" y="16.8" width="8.5" height="8.4" stroke="#D83B01" stroke-width="1.2"/><rect x="16.6" y="16.8" width="8.5" height="8.4" stroke="#D83B01" stroke-width="1.2"/></svg>
<div style="left:1779px;top:84px;width:1px;height:89px;background:#D2D2D2;"></div>
<svg style="left:1845px;top:161px;" width="13" height="9" viewBox="0 0 13 9" fill="none"><path d="M1.8 2 L6.5 6.6 L11.2 2" stroke="#333" stroke-width="1.2" stroke-linecap="round" stroke-linejoin="round"/></svg>
<div style="left:27px;top:240px;width:1825px;height:753px;background:#fff;"></div>
<div style="left:1px;top:220px;width:1851px;height:20px;background:#F0F0F0;"></div>
<div style="left:1px;top:240px;width:26px;height:753px;background:#F0F0F0;"></div>
<div style="left:27px;top:259px;width:1825px;height:1px;background:#E1E1E1;"></div>
<div style="left:1px;top:259px;width:25px;height:1px;background:#CDCDCD;"></div>
<div style="left:27px;top:279px;width:1825px;height:1px;background:#E1E1E1;"></div>
<div style="left:1px;top:279px;width:25px;height:1px;background:#CDCDCD;"></div>
<div style="left:27px;top:299px;width:1825px;height:1px;background:#E1E1E1;"></div>
<div style="left:1px;top:299px;width:25px;height:1px;background:#B4B4B4;"></div>
<div style="left:27px;top:319px;width:1825px;height:1px;background:#E1E1E1;"></div>
<div style="left:1px;top:319px;width:25px;height:1px;background:#B4B4B4;"></div>
<div style="left:27px;top:339px;width:1825px;height:1px;background:#E1E1E1;"></div>
<div style="left:1px;top:339px;width:25px;height:1px;background:#CDCDCD;"></div>
<div style="left:27px;top:359px;width:1825px;height:1px;background:#E1E1E1;"></div>
<div style="left:1px;top:359px;width:25px;height:1px;background:#CDCDCD;"></div>
<div style="left:27px;top:379px;width:1825px;height:1px;background:#E1E1E1;"></div>
<div style="left:1px;top:379px;width:25px;height:1px;background:#CDCDCD;"></div>
<div style="left:27px;top:399px;width:1825px;height:1px;background:#E1E1E1;"></div>
<div style="left:1px;top:399px;width:25px;height:1px;background:#CDCDCD;"></div>
<div style="left:27px;top:419px;width:1825px;height:1px;background:#E1E1E1;"></div>
<div style="left:1px;top:419px;width:25px;height:1px;background:#CDCDCD;"></div>
<div style="left:27px;top:439px;width:1825px;height:1px;background:#E1E1E1;"></div>
<div style="left:1px;top:439px;width:25px;height:1px;background:#CDCDCD;"></div>
<div style="left:27px;top:459px;width:1825px;height:1px;background:#E1E1E1;"></div>
<div style="left:1px;top:459px;width:25px;height:1px;background:#CDCDCD;"></div>
<div style="left:27px;top:479px;width:1825px;height:1px;background:#E1E1E1;"></div>
<div style="left:1px;top:479px;width:25px;height:1px;background:#CDCDCD;"></div>
<div style="left:27px;top:499px;width:1825px;height:1px;background:#E1E1E1;"></div>
<div style="left:1px;top:499px;width:25px;height:1px;background:#CDCDCD;"></div>
<div style="left:27px;top:519px;width:1825px;height:1px;background:#E1E1E1;"></div>
<div style="left:1px;top:519px;width:25px;height:1px;background:#CDCDCD;"></div>
<div style="left:27px;top:539px;width:1825px;height:1px;background:#E1E1E1;"></div>
<div style="left:1px;top:539px;width:25px;height:1px;background:#CDCDCD;"></div>
<div style="left:27px;top:559px;width:1825px;height:1px;background:#E1E1E1;"></div>
<div style="left:1px;top:559px;width:25px;height:1px;background:#CDCDCD;"></div>
<div style="left:27px;top:579px;width:1825px;height:1px;background:#E1E1E1;"></div>
<div style="left:1px;top:579px;width:25px;height:1px;background:#CDCDCD;"></div>
<div style="left:27px;top:599px;width:1825px;height:1px;background:#E1E1E1;"></div>
<div style="left:1px;top:599px;width:25px;height:1px;background:#CDCDCD;"></div>
<div style="left:27px;top:619px;width:1825px;height:1px;background:#E1E1E1;"></div>
<div style="left:1px;top:619px;width:25px;height:1px;background:#CDCDCD;"></div>
<div style="left:27px;top:639px;width:1825px;height:1px;background:#E1E1E1;"></div>
<div style="left:1px;top:639px;width:25px;height:1px;background:#CDCDCD;"></div>
<div style="left:27px;top:659px;width:1825px;height:1px;background:#E1E1E1;"></div>
<div style="left:1px;top:659px;width:25px;height:1px;background:#CDCDCD;"></div>
<div style="left:27px;top:679px;width:1825px;height:1px;background:#E1E1E1;"></div>
<div style="left:1px;top:679px;width:25px;height:1px;background:#CDCDCD;"></div>
<div style="left:27px;top:699px;width:1825px;height:1px;background:#E1E1E1;"></div>
<div style="left:1px;top:699px;width:25px;height:1px;background:#CDCDCD;"></div>
<div style="left:27px;top:719px;width:1825px;height:1px;background:#E1E1E1;"></div>
<div style="left:1px;top:719px;width:25px;height:1px;background:#CDCDCD;"></div>
<div style="left:27px;top:739px;width:1825px;height:1px;background:#E1E1E1;"></div>
<div style="left:1px;top:739px;width:25px;height:1px;background:#CDCDCD;"></div>
<div style="left:27px;top:759px;width:1825px;height:1px;background:#E1E1E1;"></div>
<div style="left:1px;top:759px;width:25px;height:1px;background:#CDCDCD;"></div>
<div style="left:27px;top:779px;width:1825px;height:1px;background:#E1E1E1;"></div>
<div style="left:1px;top:779px;width:25px;height:1px;background:#CDCDCD;"></div>
<div style="left:27px;top:799px;width:1825px;height:1px;background:#E1E1E1;"></div>
<div style="left:1px;top:799px;width:25px;height:1px;background:#CDCDCD;"></div>
<div style="left:27px;top:819px;width:1825px;height:1px;background:#E1E1E1;"></div>
<div style="left:1px;top:819px;width:25px;height:1px;background:#CDCDCD;"></div>
<div style="left:27px;top:839px;width:1825px;height:1px;background:#E1E1E1;"></div>
<div style="left:1px;top:839px;width:25px;height:1px;background:#CDCDCD;"></div>
<div style="left:27px;top:859px;width:1825px;height:1px;background:#E1E1E1;"></div>
<div style="left:1px;top:859px;width:25px;height:1px;background:#CDCDCD;"></div>
<div style="left:27px;top:879px;width:1825px;height:1px;background:#E1E1E1;"></div>
<div style="left:1px;top:879px;width:25px;height:1px;background:#CDCDCD;"></div>
<div style="left:27px;top:899px;width:1825px;height:1px;background:#E1E1E1;"></div>
<div style="left:1px;top:899px;width:25px;height:1px;background:#CDCDCD;"></div>
<div style="left:27px;top:919px;width:1825px;height:1px;background:#E1E1E1;"></div>
<div style="left:1px;top:919px;width:25px;height:1px;background:#CDCDCD;"></div>
<div style="left:27px;top:939px;width:1825px;height:1px;background:#E1E1E1;"></div>
<div style="left:1px;top:939px;width:25px;height:1px;background:#CDCDCD;"></div>
<div style="left:27px;top:959px;width:1825px;height:1px;background:#E1E1E1;"></div>
<div style="left:1px;top:959px;width:25px;height:1px;background:#CDCDCD;"></div>
<div style="left:27px;top:979px;width:1825px;height:1px;background:#E1E1E1;"></div>
<div style="left:1px;top:979px;width:25px;height:1px;background:#CDCDCD;"></div>
<div style="left:513px;top:240px;width:1px;height:753px;background:#E1E1E1;"></div>
<div style="left:630px;top:240px;width:1px;height:753px;background:#E1E1E1;"></div>
<div style="left:812px;top:240px;width:1px;height:753px;background:#E1E1E1;"></div>
<div style="left:1006px;top:240px;width:1px;height:753px;background:#E1E1E1;"></div>
<div style="left:1119px;top:240px;width:1px;height:753px;background:#E1E1E1;"></div>
<div style="left:1241px;top:240px;width:1px;height:753px;background:#E1E1E1;"></div>
<div style="left:1341px;top:240px;width:1px;height:753px;background:#E1E1E1;"></div>
<div style="left:1421px;top:240px;width:1px;height:753px;background:#E1E1E1;"></div>
<div style="left:1614px;top:240px;width:1px;height:753px;background:#E1E1E1;"></div>
<div style="left:1789px;top:240px;width:1px;height:753px;background:#E1E1E1;"></div>
<div style="left:513px;top:220px;width:1px;height:19px;background:#C2C2C2;"></div>
<div style="left:630px;top:220px;width:1px;height:19px;background:#C2C2C2;"></div>
<div style="left:812px;top:220px;width:1px;height:19px;background:#C2C2C2;"></div>
<div style="left:1006px;top:220px;width:1px;height:19px;background:#C2C2C2;"></div>
<div style="left:1119px;top:220px;width:1px;height:19px;background:#C2C2C2;"></div>
<div style="left:1241px;top:220px;width:1px;height:19px;background:#C2C2C2;"></div>
<div style="left:1341px;top:220px;width:1px;height:19px;background:#C2C2C2;"></div>
<div style="left:1421px;top:220px;width:1px;height:19px;background:#C2C2C2;"></div>
<div style="left:1614px;top:220px;width:1px;height:19px;background:#C2C2C2;"></div>
<div style="left:1789px;top:220px;width:1px;height:19px;background:#C2C2C2;"></div>
<div style="left:631px;top:220px;width:181px;height:18px;background:#D2D2D2;"></div>
<div style="left:1px;top:239px;width:1851px;height:1px;background:#9F9F9F;"></div>
<div style="left:630px;top:238px;width:183px;height:2px;background:#137041;"></div>
<div style="left:26px;top:220px;width:1px;height:773px;background:#9F9F9F;"></div>
<svg style="left:11px;top:224px;" width="13" height="12" viewBox="0 0 13 12" fill="none"><path d="M12 0.8 V11.2 H1 Z" fill="#B7B7B7"/></svg>
<div style="left:1px;top:300px;width:25px;height:19px;background:#D2D2D2;"></div>
<div style="left:25px;top:299px;width:2px;height:21px;background:#137041;"></div>
<div style="left:629px;top:298px;width:185px;height:23px;border:2px solid #0F6A38"></div>
<div style="left:809px;top:316px;width:7px;height:7px;background:#fff;"></div>
<div style="left:810px;top:317px;width:5px;height:5px;background:#17703F;"></div>
<div style="left:1855px;top:220px;width:17px;height:776px;background:#F6F6F6;border-radius:8.5px"></div>
<svg style="left:1858px;top:224px;" width="11" height="9" viewBox="0 0 11 9" fill="none"><path d="M1.2 7.6 Q1 7.9 1.5 7.9 H9.5 Q10 7.9 9.8 7.5 L5.9 1.2 Q5.5 0.8 5.1 1.2 Z" fill="#727272"/></svg>
<div style="left:1859px;top:237px;width:9px;height:734px;background:#727272;border-radius:4.5px"></div>
<svg style="left:1858px;top:983px;" width="11" height="9" viewBox="0 0 11 9" fill="none"><path d="M1.2 1.4 Q1 1.1 1.5 1.1 H9.5 Q10 1.1 9.8 1.5 L5.9 7.8 Q5.5 8.2 5.1 7.8 Z" fill="#727272"/></svg>
<span style="left:48.97px;top:20.00px;font-size:11px;color:#8AC4A5;transform:scaleX(1.0354);">Automatisches Speichern</span>
<span style="left:382.83px;top:20.00px;font-size:12.5px;color:#5FAE85;transform:scaleX(0.8919);">Compliance_Check_20251208_173449.csv</span>
<span style="left:802.61px;top:20.00px;font-size:12.5px;color:#5DB386;transform:scaleX(0.9811);">Suchen</span>
<span style="left:16.40px;top:59.00px;font-size:12.5px;color:#242424;transform:scaleX(1.0671);">Datei</span>
<span style="left:67.55px;top:59.00px;font-size:12.5px;color:#1b1b1b;-webkit-text-stroke:0.3px currentColor;transform:scaleX(1.1063);">Start</span>
<span style="left:116.23px;top:59.00px;font-size:12.5px;color:#242424;transform:scaleX(1.0367);">Einfügen</span>
<span style="left:189.54px;top:59.00px;font-size:12.5px;color:#242424;transform:scaleX(1.0055);">Zeichnen</span>
<span style="left:263.27px;top:59.00px;font-size:12.5px;color:#242424;transform:scaleX(1.0283);">Seitenlayout</span>
<span style="left:356.22px;top:59.00px;font-size:12.5px;color:#242424;transform:scaleX(1.0523);">Formeln</span>
<span style="left:425.21px;top:59.00px;font-size:12.5px;color:#242424;transform:scaleX(1.0551);">Daten</span>
<span style="left:480.13px;top:59.00px;font-size:12.5px;color:#242424;transform:scaleX(1.0970);">Überprüfen</span>
<span style="left:570.07px;top:59.00px;font-size:12.5px;color:#242424;transform:scaleX(1.0059);">Ansicht</span>
<span style="left:635.07px;top:59.00px;font-size:12.5px;color:#242424;transform:scaleX(1.0466);">Automatisieren</span>
<span style="left:743.50px;top:59.00px;font-size:12.5px;color:#242424;transform:scaleX(1.0690);">Hilfe</span>
<span style="left:1675.49px;top:59.00px;font-size:12.5px;color:#242424;transform:scaleX(1.0567);">Kommentare</span>
<span style="left:1786.52px;top:59.00px;font-size:12.5px;color:#fff;transform:scaleX(1.0437);">Freigeben</span>
<span style="left:15.40px;top:195.00px;font-size:12.5px;color:#242424;transform:scaleX(0.9401);">C4</span>
<span style="left:185.90px;top:192.00px;font-size:17px;color:#2b2b2b;font-style:italic;font-family:'Liberation Serif',serif;transform:scaleX(1.0000);">f</span>
<span style="left:192.91px;top:194.00px;font-size:14.5px;color:#2b2b2b;font-style:italic;font-family:'Liberation Serif',serif;transform:scaleX(1.0000);">x</span>
<span style="left:124.91px;top:1000.00px;font-size:13px;color:#1f1f1f;-webkit-text-stroke:0.3px currentColor;transform:scaleX(1.0264);">Compliance_Check_20251208_17344</span>
<span style="left:11.87px;top:1032.00px;font-size:11px;color:#242424;transform:scaleX(1.0332);">Bereit</span>
<span style="left:79.72px;top:1031.00px;font-size:11px;color:#242424;transform:scaleX(1.0884);">Bedienungshilfen: nicht verfügbar</span>
<span style="left:1824.88px;top:1031.00px;font-size:11px;color:#242424;transform:scaleX(0.9802);">100 %</span>
<span style="left:22.71px;top:124.00px;font-size:12.5px;color:#B3B3B3;transform:scaleX(0.9571);">Einfügen</span>
<span style="left:21.65px;top:164.00px;font-size:11px;color:#242424;transform:scaleX(1.0508);">Zwischenablage</span>
<span style="left:141.88px;top:97.00px;font-size:12.5px;color:#242424;transform:scaleX(0.9726);">Aptos Narrow</span>
<span style="left:267.55px;top:97.00px;font-size:12.5px;color:#242424;transform:scaleX(0.8600);">11</span>
<span style="left:313.99px;top:94.00px;font-size:17px;color:#3A3A3A;transform:scaleX(0.9659);">A</span>
<span style="left:341.37px;top:97.00px;font-size:13.5px;color:#3A3A3A;transform:scaleX(1.0278);">A</span>
<span style="left:146.79px;top:128.00px;font-size:13px;color:#2b2b2b;font-weight:700;transform:scaleX(1.0000);">F</span>
<span style="left:172.22px;top:128.00px;font-size:13px;color:#3A3A3A;font-style:italic;transform:scaleX(1.0000);">K</span>
<span style="left:198.28px;top:128.00px;font-size:13px;color:#3A3A3A;transform:scaleX(0.9000);">U</span>
<span style="left:327.38px;top:126.00px;font-size:14.5px;color:#4a4a4a;transform:scaleX(1.0036);">A</span>
<span style="left:216.75px;top:164.00px;font-size:11px;color:#242424;transform:scaleX(1.0686);">Schriftart</span>
<span style="left:524.89px;top:93.00px;font-size:10.5px;color:#3A3A3A;transform:scaleX(1.0909);">ab</span>
<span style="left:524.81px;top:101.00px;font-size:10.5px;color:#3A3A3A;transform:scaleX(1.1668);">c</span>
<span style="left:542.86px;top:98.00px;font-size:12.5px;color:#242424;transform:scaleX(0.9825);">Textumbruch</span>
<span style="left:542.87px;top:130.00px;font-size:12.5px;color:#242424;transform:scaleX(0.9476);">Verbinden und zentrieren</span>
<span style="left:501.96px;top:164.00px;font-size:11px;color:#242424;transform:scaleX(1.0854);">Ausrichtung</span>
<span style="left:726.34px;top:97.00px;font-size:12.5px;color:#242424;transform:scaleX(0.9480);">Standard</span>
<span style="left:769.08px;top:126.00px;font-size:19.5px;color:#444;transform:scaleX(0.9300);">%</span>
<span style="left:794.72px;top:129.00px;font-size:10.5px;color:#6e6e6e;transform:scaleX(0.8837);">000</span>
<span style="left:834.16px;top:126.00px;font-size:9px;color:#3A3A3A;transform:scaleX(1.0184);">0</span>
<span style="left:826.84px;top:135.00px;font-size:9px;color:#3A3A3A;transform:scaleX(0.9826);">,00</span>
<span style="left:853.05px;top:126.00px;font-size:9px;color:#3A3A3A;transform:scaleX(0.9739);">,00</span>
<span style="left:857.84px;top:135.00px;font-size:9px;color:#3A3A3A;transform:scaleX(0.9845);">,0</span>
<span style="left:777.86px;top:164.00px;font-size:11px;color:#242424;transform:scaleX(1.0366);">Zahl</span>
<span style="left:905.60px;top:123.00px;font-size:12.5px;color:#242424;transform:scaleX(0.9675);">Bedingte</span>
<span style="left:887.60px;top:139.00px;font-size:12.5px;color:#242424;transform:scaleX(0.9734);">Formatierung</span>
<span style="left:986.99px;top:123.00px;font-size:12.5px;color:#242424;transform:scaleX(0.9371);">Als Tabelle</span>
<span style="left:977.76px;top:139.00px;font-size:12.5px;color:#242424;transform:scaleX(0.9871);">formatieren</span>
<span style="left:1057.65px;top:123.00px;font-size:12.5px;color:#242424;transform:scaleX(0.9749);">Zellenformatvorlagen</span>
<span style="left:989.75px;top:164.00px;font-size:11px;color:#242424;transform:scaleX(1.0525);">Formatvorlagen</span>
<span style="left:1192.71px;top:124.00px;font-size:12.5px;color:#242424;transform:scaleX(0.9634);">Einfügen</span>
<span style="left:1246.63px;top:124.00px;font-size:12.5px;color:#242424;transform:scaleX(0.9403);">Löschen</span>
<span style="left:1297.50px;top:123.00px;font-size:12.5px;color:#242424;transform:scaleX(0.9685);">Format</span>
<span style="left:1248.65px;top:164.00px;font-size:11px;color:#242424;transform:scaleX(1.0558);">Zellen</span>
<span style="left:1379.18px;top:90.00px;font-size:12.5px;color:#242424;transform:scaleX(0.9800);">AutoSumme</span>
<span style="left:1379.18px;top:116.00px;font-size:12.5px;color:#242424;transform:scaleX(0.9692);">Ausfüllen</span>
<span style="left:1379.14px;top:142.00px;font-size:12.5px;color:#242424;transform:scaleX(0.9359);">Löschen</span>
<span style="left:1504.39px;top:87.00px;font-size:16.5px;color:#1E8BD8;transform:scaleX(0.9898);">A</span>
<span style="left:1504.63px;top:101.00px;font-size:16.5px;color:#3A3A3A;transform:scaleX(0.9500);">Z</span>
<span style="left:1482.33px;top:123.00px;font-size:12.5px;color:#242424;transform:scaleX(0.9566);">Sortieren und</span>
<span style="left:1496.49px;top:139.00px;font-size:12.5px;color:#242424;transform:scaleX(0.9793);">Filtern</span>
<span style="left:1563.23px;top:123.00px;font-size:12.5px;color:#242424;transform:scaleX(0.9608);">Suchen und</span>
<span style="left:1560.79px;top:139.00px;font-size:12.5px;color:#242424;transform:scaleX(0.9565);">Auswählen</span>
<span style="left:1465.74px;top:164.00px;font-size:11px;color:#242424;transform:scaleX(1.0633);">Bearbeiten</span>
<span style="left:1653.33px;top:123.00px;font-size:12.5px;color:#B3B3B3;transform:scaleX(0.9543);">Sensitivity</span>
<span style="left:1643.92px;top:164.00px;font-size:11px;color:#242424;transform:scaleX(1.0761);">Vertraulichkeit</span>
<span style="left:1736.77px;top:123.00px;font-size:12.5px;color:#242424;transform:scaleX(1.0324);">Add-</span>
<span style="left:1742.39px;top:139.00px;font-size:12.5px;color:#242424;transform:scaleX(0.9411);">Ins</span>
<span style="left:1731.17px;top:164.00px;font-size:11px;color:#242424;transform:scaleX(1.0441);">Add-Ins</span>
<span style="left:265.86px;top:223.00px;font-size:13px;color:#262626;transform:scaleX(0.9400);">A</span>
<span style="left:567.66px;top:223.00px;font-size:13px;color:#262626;transform:scaleX(0.9400);">B</span>
<span style="left:717.19px;top:223.00px;font-size:13px;color:#16683C;transform:scaleX(0.9400);">C</span>
<span style="left:904.83px;top:223.00px;font-size:13px;color:#262626;transform:scaleX(0.9400);">D</span>
<span style="left:1058.61px;top:223.00px;font-size:13px;color:#262626;transform:scaleX(0.9400);">E</span>
<span style="left:1176.44px;top:223.00px;font-size:13px;color:#262626;transform:scaleX(0.9400);">F</span>
<span style="left:1286.82px;top:223.00px;font-size:13px;color:#262626;transform:scaleX(0.9400);">G</span>
<span style="left:1377.01px;top:223.00px;font-size:13px;color:#262626;transform:scaleX(0.9400);">H</span>
<span style="left:1516.24px;top:223.00px;font-size:13px;color:#262626;transform:scaleX(0.9400);">I</span>
<span style="left:1699.12px;top:223.00px;font-size:13px;color:#262626;transform:scaleX(0.9400);">J</span>
<span style="left:1825.40px;top:223.00px;font-size:13px;color:#262626;transform:scaleX(0.9400);">K</span>
<span style="left:9.31px;top:244.00px;font-size:13px;color:#262626;transform:scaleX(0.9500);">1</span>
<span style="left:9.90px;top:264.00px;font-size:13px;color:#262626;transform:scaleX(0.9500);">2</span>
<span style="left:9.86px;top:284.00px;font-size:13px;color:#262626;transform:scaleX(0.9500);">3</span>
<span style="left:9.97px;top:304.00px;font-size:13px;color:#16683C;transform:scaleX(0.9500);">4</span>
<span style="left:9.84px;top:324.00px;font-size:13px;color:#262626;transform:scaleX(0.9500);">5</span>
<span style="left:9.90px;top:344.00px;font-size:13px;color:#262626;transform:scaleX(0.9500);">6</span>
<span style="left:9.90px;top:364.00px;font-size:13px;color:#262626;transform:scaleX(0.9500);">7</span>
<span style="left:9.91px;top:384.00px;font-size:13px;color:#262626;transform:scaleX(0.9500);">8</span>
<span style="left:9.88px;top:404.00px;font-size:13px;color:#262626;transform:scaleX(0.9500);">9</span>
<span style="left:6.89px;top:424.00px;font-size:13px;color:#262626;transform:scaleX(0.9500);">10</span>
<span style="left:7.47px;top:444.00px;font-size:13px;color:#262626;transform:scaleX(0.9500);">11</span>
<span style="left:6.99px;top:464.00px;font-size:13px;color:#262626;transform:scaleX(0.9500);">12</span>
<span style="left:7.01px;top:484.00px;font-size:13px;color:#262626;transform:scaleX(0.9500);">13</span>
<span style="left:6.84px;top:504.00px;font-size:13px;color:#262626;transform:scaleX(0.9500);">14</span>
<span style="left:7.02px;top:524.00px;font-size:13px;color:#262626;transform:scaleX(0.9500);">15</span>
<span style="left:7.02px;top:544.00px;font-size:13px;color:#262626;transform:scaleX(0.9500);">16</span>
<span style="left:6.99px;top:564.00px;font-size:13px;color:#262626;transform:scaleX(0.9500);">17</span>
<span style="left:7.02px;top:584.00px;font-size:13px;color:#262626;transform:scaleX(0.9500);">18</span>
<span style="left:7.00px;top:604.00px;font-size:13px;color:#262626;transform:scaleX(0.9500);">19</span>
<span style="left:7.07px;top:624.00px;font-size:13px;color:#262626;transform:scaleX(0.9500);">20</span>
<span style="left:7.17px;top:644.00px;font-size:13px;color:#262626;transform:scaleX(0.9500);">21</span>
<span style="left:7.17px;top:664.00px;font-size:13px;color:#262626;transform:scaleX(0.9500);">22</span>
<span style="left:7.18px;top:684.00px;font-size:13px;color:#262626;transform:scaleX(0.9500);">23</span>
<span style="left:7.01px;top:704.00px;font-size:13px;color:#262626;transform:scaleX(0.9500);">24</span>
<span style="left:7.19px;top:724.00px;font-size:13px;color:#262626;transform:scaleX(0.9500);">25</span>
<span style="left:7.20px;top:744.00px;font-size:13px;color:#262626;transform:scaleX(0.9500);">26</span>
<span style="left:7.17px;top:764.00px;font-size:13px;color:#262626;transform:scaleX(0.9500);">27</span>
<span style="left:7.19px;top:784.00px;font-size:13px;color:#262626;transform:scaleX(0.9500);">28</span>
<span style="left:7.17px;top:804.00px;font-size:13px;color:#262626;transform:scaleX(0.9500);">29</span>
<span style="left:7.04px;top:824.00px;font-size:13px;color:#262626;transform:scaleX(0.9500);">30</span>
<span style="left:7.14px;top:844.00px;font-size:13px;color:#262626;transform:scaleX(0.9500);">31</span>
<span style="left:7.14px;top:864.00px;font-size:13px;color:#262626;transform:scaleX(0.9500);">32</span>
<span style="left:7.15px;top:884.00px;font-size:13px;color:#262626;transform:scaleX(0.9500);">33</span>
<span style="left:6.98px;top:904.00px;font-size:13px;color:#262626;transform:scaleX(0.9500);">34</span>
<span style="left:7.16px;top:924.00px;font-size:13px;color:#262626;transform:scaleX(0.9500);">35</span>
<span style="left:7.17px;top:944.00px;font-size:13px;color:#262626;transform:scaleX(0.9500);">36</span>
<span style="left:7.14px;top:964.00px;font-size:13px;color:#262626;transform:scaleX(0.9500);">37</span>
<div style="left:1px;top:980.00px;width:25px;height:13.00px;overflow:hidden"><span style="left:6.16px;top:4.00px;font-size:13px;color:#262626;transform:scaleX(0.9500);">38</span></div>
<span style="left:28.79px;top:243.00px;font-size:14px;color:#0d0d0d;-webkit-text-stroke:0.22px currentColor;transform:scaleX(0.8518);">COMPLIANCE MANDATORY CHECK PROFESSIONAL - PRÜFBERICHT</span>
<span style="left:28.22px;top:283.00px;font-size:14px;color:#0d0d0d;-webkit-text-stroke:0.22px currentColor;transform:scaleX(0.9975);">Firma</span>
<span style="left:28.24px;top:303.00px;font-size:14px;color:#0d0d0d;-webkit-text-stroke:0.22px currentColor;transform:scaleX(0.9743);">Prüfer</span>
<span style="left:28.22px;top:323.00px;font-size:14px;color:#0d0d0d;-webkit-text-stroke:0.22px currentColor;transform:scaleX(0.9982);">Erstellt</span>
<span style="left:29.16px;top:343.00px;font-size:14px;color:#0d0d0d;-webkit-text-stroke:0.22px currentColor;transform:scaleX(0.9944);">Vorlage</span>
<span style="left:28.21px;top:363.00px;font-size:14px;color:#0d0d0d;-webkit-text-stroke:0.22px currentColor;transform:scaleX(1.0046);">Domäne</span>
<span style="left:29.16px;top:383.00px;font-size:14px;color:#0d0d0d;-webkit-text-stroke:0.22px currentColor;transform:scaleX(0.9850);">Anzahl Mandatory-Gruppen</span>
<span style="left:29.16px;top:403.00px;font-size:14px;color:#0d0d0d;-webkit-text-stroke:0.22px currentColor;transform:scaleX(0.9832);">Anzahl Optionale Gruppen</span>
<span style="left:29.04px;top:443.00px;font-size:14px;color:#0d0d0d;-webkit-text-stroke:0.22px currentColor;transform:scaleX(0.8649);">ZUSAMMENFASSUNG</span>
<span style="left:28.72px;top:463.00px;font-size:14px;color:#0d0d0d;-webkit-text-stroke:0.22px currentColor;transform:scaleX(0.9745);">Computer geprüft</span>
<span style="left:28.73px;top:483.00px;font-size:14px;color:#0d0d0d;-webkit-text-stroke:0.22px currentColor;transform:scaleX(0.9707);">Gefunden</span>
<span style="left:28.22px;top:503.00px;font-size:14px;color:#0d0d0d;-webkit-text-stroke:0.22px currentColor;transform:scaleX(1.0006);">Nicht gefunden</span>
<span style="left:28.20px;top:523.00px;font-size:14px;color:#0d0d0d;-webkit-text-stroke:0.22px currentColor;transform:scaleX(1.0065);">Durchschnittsbewertung</span>
<span style="left:28.29px;top:543.00px;font-size:14px;color:#0d0d0d;-webkit-text-stroke:0.22px currentColor;transform:scaleX(0.9297);">Exzellent (100%)</span>
<span style="left:28.75px;top:563.00px;font-size:14px;color:#0d0d0d;-webkit-text-stroke:0.22px currentColor;transform:scaleX(0.9285);">Gut (75-99%)</span>
<span style="left:29.16px;top:583.00px;font-size:14px;color:#0d0d0d;-webkit-text-stroke:0.22px currentColor;transform:scaleX(0.9660);">Verbesserungsbedarf (50-74%)</span>
<span style="left:28.24px;top:603.00px;font-size:14px;color:#0d0d0d;-webkit-text-stroke:0.22px currentColor;transform:scaleX(0.9811);">Kritisch (0-49%)</span>
<span style="left:28.40px;top:643.00px;font-size:14px;color:#0d0d0d;-webkit-text-stroke:0.22px currentColor;transform:scaleX(0.8228);">DETAILLIERTE ERGEBNISSE</span>
<span style="left:28.71px;top:663.00px;font-size:14px;color:#0d0d0d;-webkit-text-stroke:0.22px currentColor;transform:scaleX(0.9863);">Computername</span>
<span style="left:28.81px;top:683.00px;font-size:14px;color:#0d0d0d;-webkit-text-stroke:0.22px currentColor;transform:scaleX(0.8179);">CA</span>
<span style="left:28.79px;top:703.00px;font-size:14px;color:#0d0d0d;-webkit-text-stroke:0.22px currentColor;transform:scaleX(0.8444);">CLIENT</span>
<span style="left:28.44px;top:723.00px;font-size:14px;color:#0d0d0d;-webkit-text-stroke:0.22px currentColor;transform:scaleX(0.7921);">EXSE</span>
<span style="left:28.36px;top:743.00px;font-size:14px;color:#0d0d0d;-webkit-text-stroke:0.22px currentColor;transform:scaleX(0.8748);">MS1</span>
<span style="left:28.36px;top:763.00px;font-size:14px;color:#0d0d0d;-webkit-text-stroke:0.22px currentColor;transform:scaleX(0.8758);">MS2</span>
<span style="left:28.37px;top:803.00px;font-size:14px;color:#0d0d0d;-webkit-text-stroke:0.22px currentColor;transform:scaleX(0.8660);">MANDATORY-GRUPPEN ÜBERSICHT</span>
<span style="left:28.72px;top:823.00px;font-size:14px;color:#0d0d0d;-webkit-text-stroke:0.22px currentColor;transform:scaleX(0.9874);">Gruppenname</span>
<span style="left:28.27px;top:843.00px;font-size:14px;color:#0d0d0d;-webkit-text-stroke:0.22px currentColor;transform:scaleX(0.9521);">Hardening SMB</span>
<span style="left:29.19px;top:863.00px;font-size:14px;color:#0d0d0d;-webkit-text-stroke:0.22px currentColor;transform:scaleX(0.9649);">WinRM-Deployment</span>
<span style="left:28.72px;top:923.00px;font-size:14px;color:#0d0d0d;-webkit-text-stroke:0.22px currentColor;transform:scaleX(0.9636);">Compliance Mandatory Check Professional - Copyright 2026 IT-Service Walter</span>
<span style="left:514.93px;top:283.00px;font-size:14px;color:#0d0d0d;-webkit-text-stroke:0.22px currentColor;transform:scaleX(0.9950);">Max Mustermann</span>
<span style="left:514.96px;top:303.00px;font-size:14px;color:#0d0d0d;-webkit-text-stroke:0.22px currentColor;transform:scaleX(0.9548);">Dr. Check</span>
<span style="left:514.88px;top:343.00px;font-size:14px;color:#0d0d0d;-webkit-text-stroke:0.22px currentColor;transform:scaleX(1.0349);">Produktion</span>
<span style="left:516.16px;top:363.00px;font-size:14px;color:#0d0d0d;-webkit-text-stroke:0.22px currentColor;transform:scaleX(1.0176);">windowspapst.de</span>
<span style="left:515.30px;top:663.00px;font-size:14px;color:#0d0d0d;-webkit-text-stroke:0.22px currentColor;transform:scaleX(0.9652);">Status</span>
<span style="left:515.42px;top:683.00px;font-size:14px;color:#0d0d0d;-webkit-text-stroke:0.22px currentColor;transform:scaleX(0.9773);">Gefunden</span>
<span style="left:515.42px;top:703.00px;font-size:14px;color:#0d0d0d;-webkit-text-stroke:0.22px currentColor;transform:scaleX(0.9773);">Gefunden</span>
<span style="left:515.42px;top:723.00px;font-size:14px;color:#0d0d0d;-webkit-text-stroke:0.22px currentColor;transform:scaleX(0.9773);">Gefunden</span>
<span style="left:515.42px;top:743.00px;font-size:14px;color:#0d0d0d;-webkit-text-stroke:0.22px currentColor;transform:scaleX(0.9773);">Gefunden</span>
<span style="left:515.42px;top:763.00px;font-size:14px;color:#0d0d0d;-webkit-text-stroke:0.22px currentColor;transform:scaleX(0.9773);">Gefunden</span>
<span style="left:514.90px;top:823.00px;font-size:14px;color:#0d0d0d;-webkit-text-stroke:0.22px currentColor;transform:scaleX(1.0127);">Erfüllungsquote</span>
<span style="left:528.61px;top:323.00px;font-size:14px;color:#0d0d0d;-webkit-text-stroke:0.22px currentColor;transform:scaleX(0.9115);">08.12.2025 17:32</span>
<span style="left:621.34px;top:383.00px;font-size:14px;color:#0d0d0d;-webkit-text-stroke:0.22px currentColor;transform:scaleX(0.8500);">2</span>
<span style="left:621.24px;top:403.00px;font-size:14px;color:#0d0d0d;-webkit-text-stroke:0.22px currentColor;transform:scaleX(0.8500);">0</span>
<span style="left:621.25px;top:463.00px;font-size:14px;color:#0d0d0d;-webkit-text-stroke:0.22px currentColor;transform:scaleX(0.8500);">5</span>
<span style="left:621.25px;top:483.00px;font-size:14px;color:#0d0d0d;-webkit-text-stroke:0.22px currentColor;transform:scaleX(0.8500);">5</span>
<span style="left:621.24px;top:503.00px;font-size:14px;color:#0d0d0d;-webkit-text-stroke:0.22px currentColor;transform:scaleX(0.8500);">0</span>
<span style="left:601.96px;top:523.00px;font-size:14px;color:#0d0d0d;-webkit-text-stroke:0.22px currentColor;transform:scaleX(0.9302);">80%</span>
<span style="left:621.29px;top:543.00px;font-size:14px;color:#0d0d0d;-webkit-text-stroke:0.22px currentColor;transform:scaleX(0.8500);">3</span>
<span style="left:621.24px;top:563.00px;font-size:14px;color:#0d0d0d;-webkit-text-stroke:0.22px currentColor;transform:scaleX(0.8500);">0</span>
<span style="left:621.34px;top:583.00px;font-size:14px;color:#0d0d0d;-webkit-text-stroke:0.22px currentColor;transform:scaleX(0.8500);">2</span>
<span style="left:621.24px;top:603.00px;font-size:14px;color:#0d0d0d;-webkit-text-stroke:0.22px currentColor;transform:scaleX(0.8500);">0</span>
<span style="left:601.96px;top:843.00px;font-size:14px;color:#0d0d0d;-webkit-text-stroke:0.22px currentColor;transform:scaleX(0.9302);">80%</span>
<span style="left:601.96px;top:863.00px;font-size:14px;color:#0d0d0d;-webkit-text-stroke:0.22px currentColor;transform:scaleX(0.9302);">80%</span>
<span style="left:631.94px;top:663.00px;font-size:14px;color:#0d0d0d;-webkit-text-stroke:0.22px currentColor;transform:scaleX(0.9800);">Bewertung</span>
<span style="left:632.40px;top:823.00px;font-size:14px;color:#0d0d0d;-webkit-text-stroke:0.22px currentColor;transform:scaleX(1.0010);">Computer mit Mitgliedschaft</span>
<span style="left:632.49px;top:843.00px;font-size:14px;color:#0d0d0d;-webkit-text-stroke:0.22px currentColor;transform:scaleX(0.8480);">CA, CLIENT, EXSE, MS2</span>
<span style="left:632.49px;top:863.00px;font-size:14px;color:#0d0d0d;-webkit-text-stroke:0.22px currentColor;transform:scaleX(0.8445);">CA, EXSE, MS1, MS2</span>
<span style="left:777.12px;top:683.00px;font-size:14px;color:#0d0d0d;-webkit-text-stroke:0.22px currentColor;transform:scaleX(0.9190);">100%</span>
<span style="left:784.10px;top:703.00px;font-size:14px;color:#0d0d0d;-webkit-text-stroke:0.22px currentColor;transform:scaleX(0.9253);">50%</span>
<span style="left:777.12px;top:723.00px;font-size:14px;color:#0d0d0d;-webkit-text-stroke:0.22px currentColor;transform:scaleX(0.9190);">100%</span>
<span style="left:784.10px;top:743.00px;font-size:14px;color:#0d0d0d;-webkit-text-stroke:0.22px currentColor;transform:scaleX(0.9253);">50%</span>
<span style="left:777.12px;top:763.00px;font-size:14px;color:#0d0d0d;-webkit-text-stroke:0.22px currentColor;transform:scaleX(0.9190);">100%</span>
<span style="left:814.04px;top:663.00px;font-size:14px;color:#0d0d0d;-webkit-text-stroke:0.22px currentColor;transform:scaleX(0.9797);">Bewertungsstufe</span>
<span style="left:814.51px;top:823.00px;font-size:14px;color:#0d0d0d;-webkit-text-stroke:0.22px currentColor;transform:scaleX(0.9927);">Computer ohne Mitgliedschaft</span>
<span style="left:814.16px;top:843.00px;font-size:14px;color:#0d0d0d;-webkit-text-stroke:0.22px currentColor;transform:scaleX(0.8748);">MS1</span>
<span style="left:814.59px;top:863.00px;font-size:14px;color:#0d0d0d;-webkit-text-stroke:0.22px currentColor;transform:scaleX(0.8464);">CLIENT</span>
<span style="left:814.07px;top:683.00px;font-size:14px;color:#0d0d0d;-webkit-text-stroke:0.22px currentColor;transform:scaleX(0.9469);">Exzellent</span>
<span style="left:814.96px;top:703.00px;font-size:14px;color:#0d0d0d;-webkit-text-stroke:0.22px currentColor;transform:scaleX(0.9831);">Verbesserungsbedarf</span>
<span style="left:814.07px;top:723.00px;font-size:14px;color:#0d0d0d;-webkit-text-stroke:0.22px currentColor;transform:scaleX(0.9469);">Exzellent</span>
<span style="left:814.96px;top:743.00px;font-size:14px;color:#0d0d0d;-webkit-text-stroke:0.22px currentColor;transform:scaleX(0.9831);">Verbesserungsbedarf</span>
<span style="left:814.07px;top:763.00px;font-size:14px;color:#0d0d0d;-webkit-text-stroke:0.22px currentColor;transform:scaleX(0.9469);">Exzellent</span>
<span style="left:1008.31px;top:663.00px;font-size:14px;color:#0d0d0d;-webkit-text-stroke:0.22px currentColor;transform:scaleX(1.0141);">Mandatory erfüllt</span>
<span style="left:1121.44px;top:663.00px;font-size:14px;color:#0d0d0d;-webkit-text-stroke:0.22px currentColor;transform:scaleX(0.9853);">Mandatory gesamt</span>
<span style="left:1243.96px;top:663.00px;font-size:14px;color:#0d0d0d;-webkit-text-stroke:0.22px currentColor;transform:scaleX(1.0301);">Optional erfüllt</span>
<div style="left:1342px;top:661.00px;width:79px;height:20.00px;overflow:hidden"><span style="left:1.98px;top:2.00px;font-size:14px;color:#0d0d0d;-webkit-text-stroke:0.22px currentColor;transform:scaleX(0.9790);">Optional gesamt</span></div>
<span style="left:1423.44px;top:663.00px;font-size:14px;color:#0d0d0d;-webkit-text-stroke:0.22px currentColor;transform:scaleX(0.9818);">Fehlende Mandatory-Gruppen</span>
<span style="left:1616.67px;top:663.00px;font-size:14px;color:#0d0d0d;-webkit-text-stroke:0.22px currentColor;transform:scaleX(1.0111);">Optionale Mitgliedschaften</span>
<span style="left:1424.39px;top:703.00px;font-size:14px;color:#0d0d0d;-webkit-text-stroke:0.22px currentColor;transform:scaleX(0.9633);">WinRM-Deployment</span>
<span style="left:1423.47px;top:743.00px;font-size:14px;color:#0d0d0d;-webkit-text-stroke:0.22px currentColor;transform:scaleX(0.9501);">Hardening SMB</span>
<span style="left:1109.94px;top:683.00px;font-size:14px;color:#0d0d0d;-webkit-text-stroke:0.22px currentColor;transform:scaleX(0.8500);">2</span>
<span style="left:1231.94px;top:683.00px;font-size:14px;color:#0d0d0d;-webkit-text-stroke:0.22px currentColor;transform:scaleX(0.8500);">2</span>
<span style="left:1331.64px;top:683.00px;font-size:14px;color:#0d0d0d;-webkit-text-stroke:0.22px currentColor;transform:scaleX(0.8500);">0</span>
<span style="left:1411.84px;top:683.00px;font-size:14px;color:#0d0d0d;-webkit-text-stroke:0.22px currentColor;transform:scaleX(0.8500);">0</span>
<span style="left:1109.91px;top:703.00px;font-size:14px;color:#0d0d0d;-webkit-text-stroke:0.22px currentColor;transform:scaleX(0.8500);">1</span>
<span style="left:1231.94px;top:703.00px;font-size:14px;color:#0d0d0d;-webkit-text-stroke:0.22px currentColor;transform:scaleX(0.8500);">2</span>
<span style="left:1331.64px;top:703.00px;font-size:14px;color:#0d0d0d;-webkit-text-stroke:0.22px currentColor;transform:scaleX(0.8500);">0</span>
<span style="left:1411.84px;top:703.00px;font-size:14px;color:#0d0d0d;-webkit-text-stroke:0.22px currentColor;transform:scaleX(0.8500);">0</span>
<span style="left:1109.94px;top:723.00px;font-size:14px;color:#0d0d0d;-webkit-text-stroke:0.22px currentColor;transform:scaleX(0.8500);">2</span>
<span style="left:1231.94px;top:723.00px;font-size:14px;color:#0d0d0d;-webkit-text-stroke:0.22px currentColor;transform:scaleX(0.8500);">2</span>
<span style="left:1331.64px;top:723.00px;font-size:14px;color:#0d0d0d;-webkit-text-stroke:0.22px currentColor;transform:scaleX(0.8500);">0</span>
<span style="left:1411.84px;top:723.00px;font-size:14px;color:#0d0d0d;-webkit-text-stroke:0.22px currentColor;transform:scaleX(0.8500);">0</span>
<span style="left:1109.91px;top:743.00px;font-size:14px;color:#0d0d0d;-webkit-text-stroke:0.22px currentColor;transform:scaleX(0.8500);">1</span>
<span style="left:1231.94px;top:743.00px;font-size:14px;color:#0d0d0d;-webkit-text-stroke:0.22px currentColor;transform:scaleX(0.8500);">2</span>
<span style="left:1331.64px;top:743.00px;font-size:14px;color:#0d0d0d;-webkit-text-stroke:0.22px currentColor;transform:scaleX(0.8500);">0</span>
<span style="left:1411.84px;top:743.00px;font-size:14px;color:#0d0d0d;-webkit-text-stroke:0.22px currentColor;transform:scaleX(0.8500);">0</span>
<span style="left:1109.94px;top:763.00px;font-size:14px;color:#0d0d0d;-webkit-text-stroke:0.22px currentColor;transform:scaleX(0.8500);">2</span>
<span style="left:1231.94px;top:763.00px;font-size:14px;color:#0d0d0d;-webkit-text-stroke:0.22px currentColor;transform:scaleX(0.8500);">2</span>
<span style="left:1331.64px;top:763.00px;font-size:14px;color:#0d0d0d;-webkit-text-stroke:0.22px currentColor;transform:scaleX(0.8500);">0</span>
<span style="left:1411.84px;top:763.00px;font-size:14px;color:#0d0d0d;-webkit-text-stroke:0.22px currentColor;transform:scaleX(0.8500);">0</span>
<div style="left:0;top:0;width:1875px;height:1048px;border:1px solid #6e6e6e;border-top-color:#8A8086;border-left-color:#857c82;border-radius:7.5px;pointer-events:none;box-shadow:0 0 0 8px #E9E8E6"></div>
</div></body></html>
